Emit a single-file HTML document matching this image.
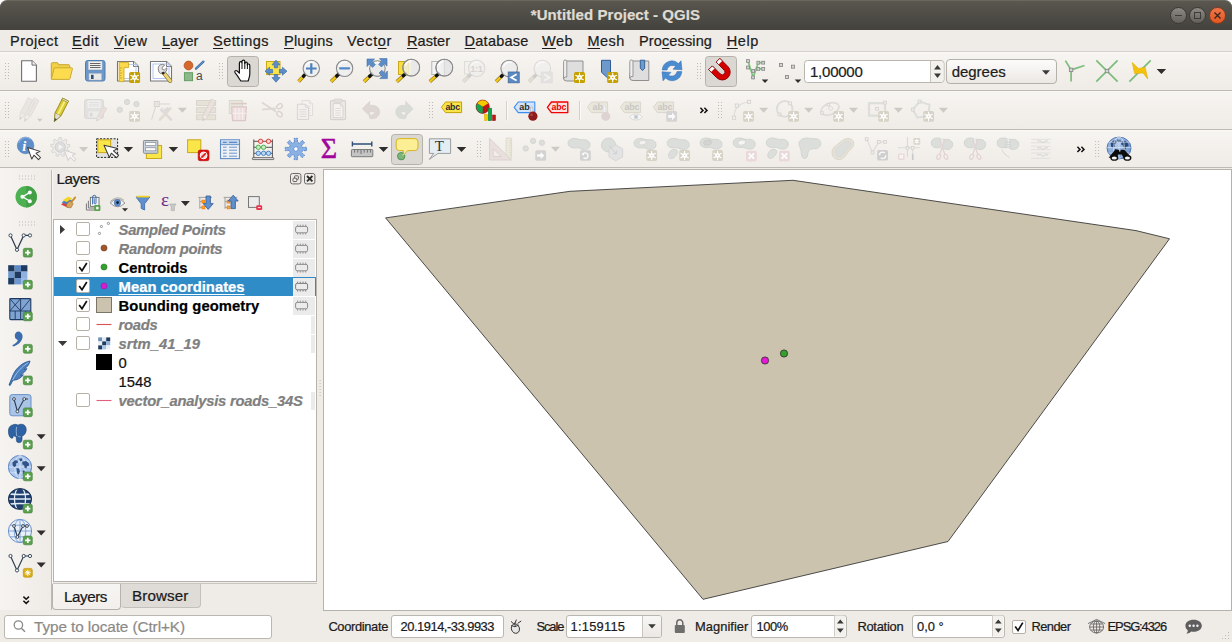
<!DOCTYPE html>
<html lang="en"><head><meta charset="utf-8"><title>*Untitled Project - QGIS</title>
<style>
*{box-sizing:border-box;margin:0;padding:0}
html,body{width:1232px;height:642px;overflow:hidden}
body{position:relative;background:#efebe7;font-family:"Liberation Sans","DejaVu Sans",sans-serif;font-size:15.2px;color:#1a1a1a}
.abs{position:absolute}
.t{position:absolute;white-space:nowrap;line-height:1;-webkit-text-stroke:.22px currentColor}
#title{left:0;top:0;width:1232px;height:30px;background:linear-gradient(#5b5850 0%,#55524b 20%,#43423d 100%);border-radius:7px 7px 0 0;border-top:1px solid #6a675f}
#titletxt{left:0;width:1232px;top:7px;text-align:center;color:#dfdbd2;font-weight:bold;font-size:15px}
.wb{position:absolute;top:7px;width:17px;height:17px;border-radius:50%;border:1px solid #3a3935;background:linear-gradient(#8b8981,#62605a)}
#menubar{left:0;top:30px;width:1232px;height:22px;background:#efebe7;border-bottom:1px solid #d6d2cd}
.mi{position:absolute;top:33px;font-size:15.3px;white-space:nowrap;line-height:17px;color:#1c1c1c}
.t u{text-decoration-thickness:1.4px;text-underline-offset:1.5px}
.tb{position:absolute;left:0;width:1232px;height:39px;background:linear-gradient(#f7f5f1,#efebe7);border-top:1px solid #faf8f5;border-bottom:1px solid #bdb9b4}
.ic{position:absolute;width:24px;height:24px;overflow:visible}
.dis{opacity:.33}
.hdl{position:absolute;width:5px;height:22px;background-image:radial-gradient(circle,#b9b5af 0.7px,transparent 1px);background-size:3px 3px;background-position:0 0}
.hdlh{position:absolute;width:22px;height:5px;background-image:radial-gradient(circle,#b9b5af 0.7px,transparent 1px);background-size:3px 3px}
.pressed{position:absolute;background:#dad7d3;border:1px solid #b4b0ab;border-radius:3px}
.arr{position:absolute;width:0;height:0;border-left:4px solid transparent;border-right:4px solid transparent;border-top:5px solid #2b2b2b}
.arr.d{border-top-color:#c9c6c2}
.sarr{position:absolute;width:0;height:0;border-left:3px solid transparent;border-right:3px solid transparent;border-top:3px solid #2b2b2b}
.field{position:absolute;background:#fff;border:1px solid #bab6b0;border-radius:3px}
.btnbg{position:absolute;background:linear-gradient(#fbfaf9,#ebe8e4);border:1px solid #b9b5af;border-radius:3px}

#ltree{left:53px;top:219px;width:264px;height:363px;background:#fff;border:1px solid #b6b2ad}
#lsel{left:54px;top:277px;width:262px;height:19px;background:#308cc6}
.cb{position:absolute;width:14px;height:14px;background:#fff;border:1px solid #b6b0a7;border-radius:2px}
.ind{position:absolute;background:#ebebeb}

#canvas{left:323px;top:169px;width:909px;height:442px;background:#fff;border:1px solid #b5b1ac}
</style></head>
<body>

<div class="abs" style="left:0;top:0;width:1232px;height:8px;background:#fff"></div><div id="title" class="abs"></div>

<div class="wb" style="left:1170px"><i class="abs" style="left:4px;top:7px;width:7px;height:1px;background:#3c3b37"></i></div>
<div class="wb" style="left:1189px"><i class="abs" style="left:4px;top:4px;width:7px;height:7px;border:1px solid #3c3b37"></i></div>
<div class="wb" style="left:1209px;background:linear-gradient(#f0764b,#e2571f);border-color:#8a3a1c"><svg class="abs" style="left:4px;top:4px" width="7" height="7" viewBox="0 0 7 7"><path d="M0.5 0.5 L6.5 6.5 M6.5 0.5 L0.5 6.5" stroke="#3a2418" stroke-width="1.3"/></svg></div>
<div id="menubar" class="abs"></div>
<div class="t" style="left:10px;top:33px;font-size:14.5px;color:#1c1c1c;letter-spacing:0.480px;line-height:17px;">Pro<u>j</u>ect</div>
<div class="t" style="left:72px;top:33px;font-size:14.5px;color:#1c1c1c;letter-spacing:0.500px;line-height:17px;"><u>E</u>dit</div>
<div class="t" style="left:114px;top:33px;font-size:14.5px;color:#1c1c1c;letter-spacing:0.582px;line-height:17px;"><u>V</u>iew</div>
<div class="t" style="left:162px;top:33px;font-size:14.5px;color:#1c1c1c;letter-spacing:0.044px;line-height:17px;"><u>L</u>ayer</div>
<div class="t" style="left:213px;top:33px;font-size:14.5px;color:#1c1c1c;letter-spacing:0.449px;line-height:17px;"><u>S</u>ettings</div>
<div class="t" style="left:284px;top:33px;font-size:14.5px;color:#1c1c1c;letter-spacing:0.205px;line-height:17px;"><u>P</u>lugins</div>
<div class="t" style="left:347px;top:33px;font-size:14.5px;color:#1c1c1c;letter-spacing:0.648px;line-height:17px;">Vect<u>o</u>r</div>
<div class="t" style="left:407px;top:33px;font-size:14.5px;color:#1c1c1c;letter-spacing:0.047px;line-height:17px;"><u>R</u>aster</div>
<div class="t" style="left:464.6px;top:33px;font-size:14.5px;color:#1c1c1c;letter-spacing:0.240px;line-height:17px;"><u>D</u>atabase</div>
<div class="t" style="left:542px;top:33px;font-size:14.5px;color:#1c1c1c;letter-spacing:0.479px;line-height:17px;"><u>W</u>eb</div>
<div class="t" style="left:587.6px;top:33px;font-size:14.5px;color:#1c1c1c;letter-spacing:0.383px;line-height:17px;"><u>M</u>esh</div>
<div class="t" style="left:639px;top:33px;font-size:14.5px;color:#1c1c1c;letter-spacing:0.127px;line-height:17px;">Pro<u>c</u>essing</div>
<div class="t" style="left:726.8px;top:33px;font-size:14.5px;color:#1c1c1c;letter-spacing:0.543px;line-height:17px;"><u>H</u>elp</div>
<div class="t" style="left:530.8px;top:7px;font-size:15px;color:#dfdbd2;font-weight:bold;letter-spacing:0.078px;">*Untitled Project - QGIS</div>
<div class="tb" style="top:52px;height:39px"></div>
<div class="tb" style="top:91px;height:39px"></div>
<div class="tb" style="top:130px;height:38px"></div>
<div class="abs" style="left:0;top:168px;width:51px;height:442px;background:linear-gradient(90deg,#f6f4f1,#efebe7)"></div>
<svg class="abs" style="left:0;top:0" width="1232" height="170" viewBox="0 0 1232 170"><rect x="5" y="63" width="1" height="1" fill="#bdb9b3"/><rect x="8" y="63" width="1" height="1" fill="#bdb9b3"/><rect x="5" y="66" width="1" height="1" fill="#bdb9b3"/><rect x="8" y="66" width="1" height="1" fill="#bdb9b3"/><rect x="5" y="69" width="1" height="1" fill="#bdb9b3"/><rect x="8" y="69" width="1" height="1" fill="#bdb9b3"/><rect x="5" y="72" width="1" height="1" fill="#bdb9b3"/><rect x="8" y="72" width="1" height="1" fill="#bdb9b3"/><rect x="5" y="75" width="1" height="1" fill="#bdb9b3"/><rect x="8" y="75" width="1" height="1" fill="#bdb9b3"/><rect x="5" y="78" width="1" height="1" fill="#bdb9b3"/><rect x="8" y="78" width="1" height="1" fill="#bdb9b3"/><rect x="219" y="63" width="1" height="1" fill="#bdb9b3"/><rect x="222" y="63" width="1" height="1" fill="#bdb9b3"/><rect x="219" y="66" width="1" height="1" fill="#bdb9b3"/><rect x="222" y="66" width="1" height="1" fill="#bdb9b3"/><rect x="219" y="69" width="1" height="1" fill="#bdb9b3"/><rect x="222" y="69" width="1" height="1" fill="#bdb9b3"/><rect x="219" y="72" width="1" height="1" fill="#bdb9b3"/><rect x="222" y="72" width="1" height="1" fill="#bdb9b3"/><rect x="219" y="75" width="1" height="1" fill="#bdb9b3"/><rect x="222" y="75" width="1" height="1" fill="#bdb9b3"/><rect x="219" y="78" width="1" height="1" fill="#bdb9b3"/><rect x="222" y="78" width="1" height="1" fill="#bdb9b3"/><rect x="697" y="63" width="1" height="1" fill="#bdb9b3"/><rect x="700" y="63" width="1" height="1" fill="#bdb9b3"/><rect x="697" y="66" width="1" height="1" fill="#bdb9b3"/><rect x="700" y="66" width="1" height="1" fill="#bdb9b3"/><rect x="697" y="69" width="1" height="1" fill="#bdb9b3"/><rect x="700" y="69" width="1" height="1" fill="#bdb9b3"/><rect x="697" y="72" width="1" height="1" fill="#bdb9b3"/><rect x="700" y="72" width="1" height="1" fill="#bdb9b3"/><rect x="697" y="75" width="1" height="1" fill="#bdb9b3"/><rect x="700" y="75" width="1" height="1" fill="#bdb9b3"/><rect x="697" y="78" width="1" height="1" fill="#bdb9b3"/><rect x="700" y="78" width="1" height="1" fill="#bdb9b3"/><path d="M21.6 60.7 h10.4 l4.4 4.4 v16.2 h-14.8 z" fill="#fff" stroke="#6e6e6e" stroke-width="1.1" stroke-linejoin="round"/><path d="M32 60.7 v4.4 h4.4" fill="#f4f4f4" stroke="#6e6e6e" stroke-width="1"/><path d="M51.3 79 v-15.3 q0-1 1-1 h4.8 q.8 0 1 .8 l.4 1.2 h10.2 q1 0 1 1 v3" fill="#f3cf45" stroke="#c6a62f" stroke-width="1"/><path d="M51.4 79.2 l2.6-10.6 q.2-.8 1-.8 h16.6 q1 0 .8 1 l-2.4 9.8 q-.2.8-1 .8 h-17 q-.8 0-.6-.2z" fill="#fddb4f" stroke="#c9aa33" stroke-width="1"/><rect x="85.5" y="60.5" width="19.5" height="20.5" rx="2.2" fill="#6c98c9" stroke="#4f7db3" stroke-width="1"/><rect x="88.5" y="61.5" width="13.5" height="8.2" fill="#f1f1ef" stroke="#d0d0d0" stroke-width=".5"/><path d="M90 63.5 h10.5 M90 65.5 h10.5 M90 67.5 h10.5" stroke="#555" stroke-width=".9"/><rect x="89" y="73.5" width="12.5" height="6.5" fill="#e9e9e7" stroke="#bbb" stroke-width=".5"/><rect x="91" y="74.8" width="2.6" height="4.2" fill="#2d4f7c"/><path d="M117.5 61.5 h16 l5 5 v14.5 h-21 z" fill="#fff" stroke="#777" stroke-width="1.1" stroke-linejoin="round"/><path d="M133.5 61.5 v5 h5" fill="#f2f2f2" stroke="#777" stroke-width="1"/><rect x="121" y="64.5" width="15" height="14" fill="none" stroke="#a8c0f0" stroke-width=".8"/><path d="M119.2 62.4 h9.4 v5.2 h-4.6 v14 h-4.8 z" fill="#fbd94c" stroke="#d5ad1e" stroke-width=".9" stroke-linejoin="round"/><path d="M119.6 68 h2.4 M119.6 70.5 h1.6 M119.6 73 h2.4 M119.6 75.5 h1.6 M119.6 78 h2.4" stroke="#b8921a" stroke-width=".7"/><rect x="129.1" y="72" width="11" height="11" rx="1.87" fill="#c4a000"/><path d="M134.6 73.1 L134.6 81.9 M130.79 75.3 L138.41 79.7 M130.79 79.7 L138.41 75.3 " stroke="#fff" stroke-width="1.1" stroke-linecap="round"/><polygon points="136.98,78.88 134.6,80.25 132.22,78.88 132.22,76.12 134.6,74.75 136.98,76.12" fill="#fff"/><circle cx="134.6" cy="77.5" r="0.82" fill="#c4a000" opacity=".8"/><path d="M150.5 61.5 h16 l5 5 v14.5 h-21 z" fill="#fff" stroke="#777" stroke-width="1.1" stroke-linejoin="round"/><path d="M166.5 61.5 v5 h5" fill="#f2f2f2" stroke="#777" stroke-width="1"/><rect x="153" y="64" width="16" height="14.5" fill="none" stroke="#a8c0f0" stroke-width=".9"/><path d="M163.2 72.2 L170.2 80.8" stroke="#8a7a3a" stroke-width="4.2" stroke-linecap="round"/><path d="M163.2 72.2 L170.2 80.8" stroke="#ecd57a" stroke-width="2.8" stroke-linecap="round"/><path d="M158.2 68.6 a4 4 0 0 1 6.4-3.4 l-2.6 2.2 l.4 2 l2 .6 l2.4-2.2 a4 4 0 0 1-5.2 4.8 l-.8 1.2 l-1.8-1.6 z" fill="#e4e4e4" stroke="#777" stroke-width=".9" stroke-linejoin="round"/><path d="M162.4 72.4 l1.6 1.6" stroke="#222" stroke-width="2.4"/><circle cx="188.5" cy="65.5" r="4.4" fill="#d4682f" stroke="#b6501e" stroke-width=".8"/><path d="M196 68.7 L203.4 61.6" stroke="#3f6ea6" stroke-width="2.3" stroke-linecap="round"/><path d="M196 68.7 L203.4 61.6" stroke="#6a98cf" stroke-width="1" stroke-linecap="round"/><rect x="184.4" y="72.7" width="8.2" height="8" fill="#8cb88c" stroke="#5b9a5b" stroke-width=".9"/><text x="196" y="79.9" font-family="Liberation Sans, sans-serif" font-size="12" fill="#4a4a4a">a</text><rect x="227.5" y="56.5" width="31" height="30" rx="3" fill="#dbd8d4" stroke="#b5b1ab"/><path d="M240.8 81 c-1.6-2.6-3.4-5.6-5.6-8.2 c-1.2-1.6 .4-3 2-1.8 l2.2 2.2 v-10 c0-2 2.6-2 2.6 0 v-1.6 c0-2 2.8-2 2.8 0 v1.8 c0-1.8 2.6-1.8 2.6 0 v1.8 c0-1.6 2.4-1.6 2.4 .2 v8.400000000000001 c0 3-1 4.400000000000001-1.6 7.2 z" fill="#fff" stroke="#111" stroke-width="1.2" stroke-linejoin="round"/><path d="M242 63.5 v5.5 M244.8 62 v7 M247.4 63.5 v5.5" stroke="#111" stroke-width="1"/><rect x="266.5" y="61.5" width="13.5" height="13" fill="#fce54b" stroke="#c9a81c" stroke-width="1"/><g transform="rotate(0 276 71.2)"><path d="M276 60.2 l4 4.6 h-2.3 v3 h-3.4 v-3 h-2.3 z" fill="#5d8cc7" stroke="#3f70ac" stroke-width=".7" stroke-linejoin="round"/></g><g transform="rotate(90 276 71.2)"><path d="M276 60.2 l4 4.6 h-2.3 v3 h-3.4 v-3 h-2.3 z" fill="#5d8cc7" stroke="#3f70ac" stroke-width=".7" stroke-linejoin="round"/></g><g transform="rotate(180 276 71.2)"><path d="M276 60.2 l4 4.6 h-2.3 v3 h-3.4 v-3 h-2.3 z" fill="#5d8cc7" stroke="#3f70ac" stroke-width=".7" stroke-linejoin="round"/></g><g transform="rotate(270 276 71.2)"><path d="M276 60.2 l4 4.6 h-2.3 v3 h-3.4 v-3 h-2.3 z" fill="#5d8cc7" stroke="#3f70ac" stroke-width=".7" stroke-linejoin="round"/></g><path d="M303.79 75.9 L298.6 81.4" stroke="#8f7a1e" stroke-width="3.6" stroke-linecap="butt"/><path d="M303.79 75.9 L298.6 81.4" stroke="#f3c515" stroke-width="2.3" stroke-linecap="butt"/><path d="M305.64 73.94 L303.52 76.19" stroke="#111" stroke-width="3.4" stroke-linecap="round"/><circle cx="311.3" cy="68.5" r="8.2" fill="#efefef" fill-opacity="1" stroke="#8a8a8a" stroke-width="1.1"/><path d="M305.56 66.45 A6.15 6.15 0 0 1 313.76 62.6" fill="none" stroke="#fff" stroke-width="1.4" stroke-opacity=".9"/><path d="M306 68.5 h10.6 M311.3 63.2 v10.6" stroke="#4d80bd" stroke-width="2.2"/><path d="M337.01 75.82 L331 81.6" stroke="#8f7a1e" stroke-width="3.6" stroke-linecap="butt"/><path d="M337.01 75.82 L331 81.6" stroke="#f3c515" stroke-width="2.3" stroke-linecap="butt"/><path d="M338.96 73.95 L336.72 76.1" stroke="#111" stroke-width="3.4" stroke-linecap="round"/><circle cx="344.6" cy="68.3" r="8.2" fill="#efefef" fill-opacity="1" stroke="#8a8a8a" stroke-width="1.1"/><path d="M338.86 66.25 A6.15 6.15 0 0 1 347.06 62.4" fill="none" stroke="#fff" stroke-width="1.4" stroke-opacity=".9"/><path d="M340 68.3 h9.2" stroke="#5588c6" stroke-width="2.2" stroke-linecap="round"/><path d="M369.99 76 L364 81.6" stroke="#8f7a1e" stroke-width="3.6" stroke-linecap="butt"/><path d="M369.99 76 L364 81.6" stroke="#f3c515" stroke-width="2.3" stroke-linecap="butt"/><path d="M371.97 74.16 L369.7 76.27" stroke="#111" stroke-width="3.4" stroke-linecap="round"/><circle cx="377.4" cy="68.6" r="7.8" fill="#e9e9e9" fill-opacity="0.9" stroke="#8a8a8a" stroke-width="1.1"/><path d="M371.94 66.65 A5.85 5.85 0 0 1 379.74 62.98" fill="none" stroke="#fff" stroke-width="1.4" stroke-opacity=".9"/><g transform="rotate(0 377.2 68.8)"><path d="M367 59 h7.6 l-2.400000000000001 2.400000000000001 l3.2 3.2 l-2.8 2.8 l-3.2-3.2 l-2.4 2.4 z" fill="#5d8cc7" stroke="#4070ad" stroke-width=".6" stroke-linejoin="round"/></g><g transform="rotate(90 377.2 68.8)"><path d="M367 59 h7.6 l-2.400000000000001 2.400000000000001 l3.2 3.2 l-2.8 2.8 l-3.2-3.2 l-2.4 2.4 z" fill="#5d8cc7" stroke="#4070ad" stroke-width=".6" stroke-linejoin="round"/></g><g transform="rotate(180 377.2 68.8)"><path d="M367 59 h7.6 l-2.400000000000001 2.400000000000001 l3.2 3.2 l-2.8 2.8 l-3.2-3.2 l-2.4 2.4 z" fill="#5d8cc7" stroke="#4070ad" stroke-width=".6" stroke-linejoin="round"/></g><rect x="398.5" y="61.5" width="10" height="13" fill="#f7df3e" stroke="#c9a81c" stroke-width="1"/><path d="M403.57 75.48 L396.8 81.6" stroke="#8f7a1e" stroke-width="3.6" stroke-linecap="butt"/><path d="M403.57 75.48 L396.8 81.6" stroke="#f3c515" stroke-width="2.3" stroke-linecap="butt"/><path d="M405.57 73.66 L403.27 75.74" stroke="#111" stroke-width="3.4" stroke-linecap="round"/><circle cx="411.2" cy="67.6" r="8.4" fill="#f0eedd" fill-opacity="0.88" stroke="#8a8a8a" stroke-width="1.1"/><path d="M405.32 65.5 A6.3 6.3 0 0 1 413.72 61.55" fill="none" stroke="#fff" stroke-width="1.4" stroke-opacity=".9"/><path d="M411.2 59.4 a8.2 8.2 0 0 1 0 16.4 z" fill="#e9e9e9"/><circle cx="411.2" cy="67.6" r="8.4" fill="none" stroke="#8a8a8a" stroke-width="1.1"/><rect x="431.8" y="61.5" width="10" height="13" fill="#f4f4f4" stroke="#b5b5b5" stroke-width="1"/><path d="M436.66 75.47 L429.8 81.6" stroke="#8f7a1e" stroke-width="3.6" stroke-linecap="butt"/><path d="M436.66 75.47 L429.8 81.6" stroke="#f3c515" stroke-width="2.3" stroke-linecap="butt"/><path d="M438.67 73.67 L436.36 75.73" stroke="#111" stroke-width="3.4" stroke-linecap="round"/><circle cx="444.3" cy="67.6" r="8.4" fill="#f2f2f2" fill-opacity="0.9" stroke="#8a8a8a" stroke-width="1.1"/><path d="M438.42 65.5 A6.3 6.3 0 0 1 446.82 61.55" fill="none" stroke="#fff" stroke-width="1.4" stroke-opacity=".9"/><path d="M444.3 59.4 a8.2 8.2 0 0 1 0 16.4 z" fill="#e6e6e6"/><path d="M444.3 59.6 v16" stroke="#cfcfcf" stroke-width=".8"/><circle cx="444.3" cy="67.6" r="8.4" fill="none" stroke="#8a8a8a" stroke-width="1.1"/><g opacity=".55"><rect x="464.5" y="61.5" width="9" height="12.5" fill="#f2f1ef" stroke="#cfccc8" stroke-width="1"/><path d="M469.22 75.83 L463.3 81.6" stroke="#bdb9b0" stroke-width="3.6" stroke-linecap="butt"/><path d="M469.22 75.83 L463.3 81.6" stroke="#d9d4c4" stroke-width="2.3" stroke-linecap="butt"/><path d="M471.16 73.95 L468.94 76.11" stroke="#b0b0b0" stroke-width="3.4" stroke-linecap="round"/><circle cx="476.7" cy="68.3" r="8.2" fill="#f0efee" fill-opacity="1" stroke="#c9c9c9" stroke-width="1.1"/><path d="M470.96 66.25 A6.15 6.15 0 0 1 479.16 62.4" fill="none" stroke="#fff" stroke-width="1.4" stroke-opacity=".9"/><text x="470.2" y="72.3" font-family="Liberation Sans, sans-serif" font-weight="bold" font-size="9.5" fill="#bdbdbd" letter-spacing="-.4">1:1</text></g><path d="M501.72 76.03 L496 81.6" stroke="#8f7a1e" stroke-width="3.6" stroke-linecap="butt"/><path d="M501.72 76.03 L496 81.6" stroke="#f3c515" stroke-width="2.3" stroke-linecap="butt"/><path d="M503.66 74.15 L501.44 76.31" stroke="#111" stroke-width="3.4" stroke-linecap="round"/><circle cx="509.2" cy="68.6" r="8.3" fill="#ededed" fill-opacity="1" stroke="#8a8a8a" stroke-width="1.1"/><path d="M503.39 66.52 A6.23 6.23 0 0 1 511.69 62.62" fill="none" stroke="#fff" stroke-width="1.4" stroke-opacity=".9"/><rect x="508.2" y="72" width="11" height="10.8" fill="#5b89c2" stroke="#41699c" stroke-width=".8"/><path d="M516.6 74.2 l-5.6 3.2 l5.6 3.2" fill="none" stroke="#fff" stroke-width="1.7"/><g opacity=".55"><path d="M534.81 76.02 L529 81.6" stroke="#bdb9b0" stroke-width="3.6" stroke-linecap="butt"/><path d="M534.81 76.02 L529 81.6" stroke="#d9d4c4" stroke-width="2.3" stroke-linecap="butt"/><path d="M536.76 74.15 L534.52 76.3" stroke="#b0b0b0" stroke-width="3.4" stroke-linecap="round"/><circle cx="542.3" cy="68.6" r="8.3" fill="#f0efee" fill-opacity="1" stroke="#c9c9c9" stroke-width="1.1"/><path d="M536.49 66.52 A6.23 6.23 0 0 1 544.79 62.62" fill="none" stroke="#fff" stroke-width="1.4" stroke-opacity=".9"/><rect x="541.2" y="72" width="11" height="10.8" fill="#d9d9d9" stroke="#cfcfcf" stroke-width=".8"/><path d="M544 74.2 l5.6 3.2 l-5.6 3.2" fill="none" stroke="#f4f4f4" stroke-width="1.7"/></g><path d="M565.7 61 h17.3 v20 h-16.2 q-3.4 0 -3.4 -3 z" fill="#dedede" stroke="#8f8f8f" stroke-width="1" stroke-linejoin="round"/><path d="M563.6 61.5 q0-1.5 1.6-1.5 q1.6 0 1.6 1.5 v15.5 q-2.400000000000001-.6-3.2 1.6 z" fill="#efefef" stroke="#8f8f8f" stroke-width=".9"/><rect x="574" y="72" width="11" height="11" rx="1.87" fill="#c4a000"/><path d="M579.5 73.1 L579.5 81.9 M575.69 75.3 L583.31 79.7 M575.69 79.7 L583.31 75.3 " stroke="#fff" stroke-width="1.1" stroke-linecap="round"/><polygon points="581.88,78.88 579.5,80.25 577.12,78.88 577.12,76.12 579.5,74.75 581.88,76.12" fill="#fff"/><circle cx="579.5" cy="77.5" r="0.82" fill="#c4a000" opacity=".8"/><path d="M601.5 60.3 h9 v20.2 l-4-3.6 l-5-4.6 z" fill="#6d9acb" stroke="#2f5c96" stroke-width="1" stroke-linejoin="round"/><rect x="607.2" y="72" width="11" height="11" rx="1.87" fill="#c4a000"/><path d="M612.7 73.1 L612.7 81.9 M608.89 75.3 L616.51 79.7 M608.89 79.7 L616.51 75.3 " stroke="#fff" stroke-width="1.1" stroke-linecap="round"/><polygon points="615.08,78.88 612.7,80.25 610.32,78.88 610.32,76.12 612.7,74.75 615.08,76.12" fill="#fff"/><circle cx="612.7" cy="77.5" r="0.82" fill="#c4a000" opacity=".8"/><path d="M631.9 61 h16.9 v19.5 h-15.8 q-3.4 0 -3.4 -3 z" fill="#dedede" stroke="#8f8f8f" stroke-width="1" stroke-linejoin="round"/><path d="M629.8 61.5 q0-1.5 1.6-1.5 q1.6 0 1.6 1.5 v15 q-2.400000000000001-.6-3.2 1.6 z" fill="#efefef" stroke="#8f8f8f" stroke-width=".9"/><path d="M640.3 60.2 h4.4 v8 l-2.2 2.4 l-2.2-2.4 z" fill="#6d9acb" stroke="#2f5c96" stroke-width=".9"/><path d="M662.2 70 a9.6 9.6 0 0 1 16.2-6.400000000000001 l2.6-2.800000000000001 l1 9 l-9 -.6 l2.6-2.6 a5.4 5.4 0 0 0 -8.6 3.4 z" fill="#4b8bd0" stroke="#2f6bb0" stroke-width=".5"/><path d="M681.8 71.6 a9.6 9.6 0 0 1 -16.2 6.400000000000001 l-2.6 2.800000000000001 l-1 -9 l9 .6 l-2.6 2.6 a5.4 5.4 0 0 0 8.6-3.4 z" fill="#4b8bd0" stroke="#2f6bb0" stroke-width=".5"/><rect x="705.5" y="56.5" width="31" height="30" rx="3" fill="#dbd8d4" stroke="#b5b1ab"/><g transform="rotate(-45 721.5 71.3)"><path d="M713.6 61 h5.2 v11.4 a2.7 2.7 0 0 0 5.4 0 v-11.4 h5.2 v11.4 a7.9 7.9 0 0 1 -15.8 0 z" fill="#d40000" stroke="#8c0000" stroke-width=".9"/><rect x="713.6" y="61" width="5.2" height="3.8" fill="#fff" stroke="#8c0000" stroke-width=".7"/><rect x="724.2" y="61" width="5.2" height="3.8" fill="#fff" stroke="#8c0000" stroke-width=".7"/></g><path d="M748 61 L753.2 77.4 L758.3 62.7 H763.2 M748 67.5 L753.2 71 L758.3 68.9 H763.2" fill="none" stroke="#7cc47c" stroke-width="1.7"/><rect x="746.6" y="59.6" width="2.8" height="2.8" fill="#d6d6d6" stroke="#8c8c8c" stroke-width=".9"/><rect x="746.6" y="66.1" width="2.8" height="2.8" fill="#d6d6d6" stroke="#8c8c8c" stroke-width=".9"/><rect x="751.8" y="69.6" width="2.8" height="2.8" fill="#d6d6d6" stroke="#8c8c8c" stroke-width=".9"/><rect x="751.6" y="76" width="2.8" height="2.8" fill="#d6d6d6" stroke="#8c8c8c" stroke-width=".9"/><rect x="756.9" y="61.3" width="2.8" height="2.8" fill="#d6d6d6" stroke="#8c8c8c" stroke-width=".9"/><rect x="761.8" y="61.3" width="2.8" height="2.8" fill="#d6d6d6" stroke="#8c8c8c" stroke-width=".9"/><rect x="756.9" y="67.5" width="2.8" height="2.8" fill="#d6d6d6" stroke="#8c8c8c" stroke-width=".9"/><rect x="761.8" y="67.5" width="2.8" height="2.8" fill="#d6d6d6" stroke="#8c8c8c" stroke-width=".9"/><path d="M761.75 79.6 h6.5 l-3.25 3.4 z" fill="#2e2e2e"/><rect x="779.5" y="63.5" width="3" height="3" fill="#d6d6d6" stroke="#8c8c8c" stroke-width=".9"/><rect x="791.5" y="65.2" width="3" height="3" fill="#d6d6d6" stroke="#8c8c8c" stroke-width=".9"/><rect x="785.5" y="75.5" width="3" height="3" fill="#d6d6d6" stroke="#8c8c8c" stroke-width=".9"/><path d="M794.75 79.6 h6.5 l-3.25 3.4 z" fill="#2e2e2e"/><rect x="804.5" y="60.5" width="139.5" height="22" rx="3" fill="#fff" stroke="#b9b5af"/><path d="M930.5 61 v21" stroke="#c9c5bf"/><path d="M931 61 h10 q2.500000000000001 0 2.500000000000001 2.500000000000001 v16 q0 2.500000000000001-2.500000000000001 2.500000000000001 h-10 z" fill="#f3f1ee"/><path d="M934 69.5 l3.5-4.5 l3.5 4.5 z M934 73.5 l3.5 4.5 l3.5-4.5 z" fill="#3a3a3a"/><defs><linearGradient id="btng" x1="0" y1="0" x2="0" y2="1"><stop offset="0" stop-color="#fdfcfb"/><stop offset="1" stop-color="#ebe8e3"/></linearGradient></defs><rect x="946.5" y="59.5" width="110" height="24" rx="3.5" fill="url(#btng)" stroke="#b4b0aa"/><path d="M1042 70.3 h8 l-4 4.4 z" fill="#3a3a3a"/><path d="M1065.4 60.6 L1071.1 69.9 L1084.5 65.5 M1071.1 69.9 V81.6" fill="none" stroke="#7cbd7c" stroke-width="1.7"/><rect x="1069.4" y="68.2" width="3.4" height="3.4" fill="#d6d6d6" stroke="#8c8c8c" stroke-width=".9"/><path d="M1096.3 60.3 L1117.6 81.6 M1117.6 60.3 L1096.3 81.6" stroke="#7cbd7c" stroke-width="1.7"/><rect x="1105.3" y="69.3" width="3.4" height="3.4" fill="#d6d6d6" stroke="#8c8c8c" stroke-width=".9"/><path d="M1129.4 81.6 L1150.7 60.3" stroke="#7cbd7c" stroke-width="1.7"/><path d="M1132.2 62.5 L1138.4 68.4 L1145.2 67.4 L1147.8 79 L1143 73 L1134.6 73.6 z" fill="#f4c20d" stroke="#e0ac00" stroke-width=".6" stroke-linejoin="round"/><path d="M1156.65 69 h9.5 l-4.75 5 z" fill="#2e2e2e"/><rect x="5" y="102" width="1" height="1" fill="#bdb9b3"/><rect x="8" y="102" width="1" height="1" fill="#bdb9b3"/><rect x="5" y="105" width="1" height="1" fill="#bdb9b3"/><rect x="8" y="105" width="1" height="1" fill="#bdb9b3"/><rect x="5" y="108" width="1" height="1" fill="#bdb9b3"/><rect x="8" y="108" width="1" height="1" fill="#bdb9b3"/><rect x="5" y="111" width="1" height="1" fill="#bdb9b3"/><rect x="8" y="111" width="1" height="1" fill="#bdb9b3"/><rect x="5" y="114" width="1" height="1" fill="#bdb9b3"/><rect x="8" y="114" width="1" height="1" fill="#bdb9b3"/><rect x="5" y="117" width="1" height="1" fill="#bdb9b3"/><rect x="8" y="117" width="1" height="1" fill="#bdb9b3"/><rect x="429" y="102" width="1" height="1" fill="#bdb9b3"/><rect x="432" y="102" width="1" height="1" fill="#bdb9b3"/><rect x="429" y="105" width="1" height="1" fill="#bdb9b3"/><rect x="432" y="105" width="1" height="1" fill="#bdb9b3"/><rect x="429" y="108" width="1" height="1" fill="#bdb9b3"/><rect x="432" y="108" width="1" height="1" fill="#bdb9b3"/><rect x="429" y="111" width="1" height="1" fill="#bdb9b3"/><rect x="432" y="111" width="1" height="1" fill="#bdb9b3"/><rect x="429" y="114" width="1" height="1" fill="#bdb9b3"/><rect x="432" y="114" width="1" height="1" fill="#bdb9b3"/><rect x="429" y="117" width="1" height="1" fill="#bdb9b3"/><rect x="432" y="117" width="1" height="1" fill="#bdb9b3"/><rect x="718" y="102" width="1" height="1" fill="#bdb9b3"/><rect x="721" y="102" width="1" height="1" fill="#bdb9b3"/><rect x="718" y="105" width="1" height="1" fill="#bdb9b3"/><rect x="721" y="105" width="1" height="1" fill="#bdb9b3"/><rect x="718" y="108" width="1" height="1" fill="#bdb9b3"/><rect x="721" y="108" width="1" height="1" fill="#bdb9b3"/><rect x="718" y="111" width="1" height="1" fill="#bdb9b3"/><rect x="721" y="111" width="1" height="1" fill="#bdb9b3"/><rect x="718" y="114" width="1" height="1" fill="#bdb9b3"/><rect x="721" y="114" width="1" height="1" fill="#bdb9b3"/><rect x="718" y="117" width="1" height="1" fill="#bdb9b3"/><rect x="721" y="117" width="1" height="1" fill="#bdb9b3"/><g opacity=".6"><path d="M28.1 97.76 L20.52 112.37 L19.8 119.6 L25.31 114.85 L32.9 100.24 z" fill="#e3dedb" stroke="#d5d0cc" stroke-width=".9" stroke-linejoin="round"/><path d="M20.52 112.37 L19.8 119.6 L25.31 114.85 z" fill="#ece9e6" stroke="#d5d0cc" stroke-width=".6" stroke-linejoin="round"/><path d="M20.09 116.71 L19.8 119.6 L22 117.7 z" fill="#c9c5c1"/><path d="M34.03 97.88 L25.44 113.91 L24.6 121.4 L30.37 116.55 L38.97 100.52 z" fill="#e6e0dc" stroke="#d3ceca" stroke-width=".9" stroke-linejoin="round"/><path d="M25.44 113.91 L24.6 121.4 L30.37 116.55 z" fill="#efece9" stroke="#d3ceca" stroke-width=".6" stroke-linejoin="round"/><path d="M24.94 118.4 L24.6 121.4 L26.91 119.46 z" fill="#c4c0bc"/><path d="M35.56 100.96 L27.91 115.23" stroke="#dcd3cf" stroke-width="1.57"/></g><path d="M37 118.8 h5.6 l-2.8 3 z" fill="#cdcac5"/><path d="M62.66 98.09 L55.13 112.75 L54.3 121.6 L61 115.77 L68.54 101.11 z" fill="#dccb2e" stroke="#8f8420" stroke-width=".9" stroke-linejoin="round"/><path d="M55.13 112.75 L54.3 121.6 L61 115.77 z" fill="#e0ddd6" stroke="#8f8420" stroke-width=".6" stroke-linejoin="round"/><path d="M54.63 118.06 L54.3 121.6 L56.98 119.27 z" fill="#4a4a4a"/><path d="M64.69 101.38 L58.07 114.26" stroke="#f6ee8a" stroke-width="1.85"/><path d="M62.66 98.09 L61.93 99.52 L67.8 102.53 L68.54 101.11 z" fill="#f0eee6" stroke="#8f8420" stroke-width=".7"/><g opacity=".75"><rect x="84.5" y="99.5" width="19" height="19" rx="2" fill="#dcdcdc" stroke="#d2d2d2"/><rect x="87.5" y="100.5" width="13" height="7.5" fill="#efefef"/><path d="M89 102.5 h10 M89 104.3 h10 M89 106.100000000000001 h10" stroke="#d5d5d5" stroke-width=".8"/><rect x="88.5" y="111.5" width="11" height="6" fill="#ebebeb"/><rect x="90" y="112.8" width="2.4" height="3.8" fill="#d0d0d0"/><path d="M103.59 106.59 L97.71 115.97 L96.8 121 L100.93 117.98 L106.81 108.61 z" fill="#e6d9d5" stroke="#d8cdc9" stroke-width=".9" stroke-linejoin="round"/><path d="M97.71 115.97 L96.8 121 L100.93 117.98 z" fill="#efebe8" stroke="#d8cdc9" stroke-width=".6" stroke-linejoin="round"/><path d="M97.17 118.99 L96.8 121 L98.45 119.79 z" fill="#c9c5c1"/></g><circle cx="119.8" cy="109.8" r="2.7" fill="#dddedb" stroke="#d2d3cf" stroke-width=".8"/><circle cx="127" cy="102" r="2.7" fill="#dddedb" stroke="#d2d3cf" stroke-width=".8"/><circle cx="136.4" cy="104" r="2.7" fill="#dddedb" stroke="#d2d3cf" stroke-width=".8"/><rect x="129.2" y="111" width="10.8" height="10.8" rx="1.84" fill="#d6d2c4"/><path d="M134.6 112.08 L134.6 120.72 M130.86 114.24 L138.34 118.56 M130.86 118.56 L138.34 114.24 " stroke="#fff" stroke-width="1.08" stroke-linecap="round"/><polygon points="136.94,117.75 134.6,119.1 132.26,117.75 132.26,115.05 134.6,113.7 136.94,115.05" fill="#fff"/><circle cx="134.6" cy="116.4" r="0.81" fill="#d6d2c4" opacity=".8"/><g opacity=".8"><path d="M159.5 104 H170 M155.6 106.8 L151.6 119.5" stroke="#d3cfcb" stroke-width="1"/><rect x="154.3" y="101.5" width="5" height="5" fill="#f1efed" stroke="#cfcbc7" stroke-width="1"/><circle cx="156.8" cy="104" r="1.2" fill="none" stroke="#cfcbc7" stroke-width=".7"/><path d="M160 119.6 L170.4 108.4" stroke="#dedacd" stroke-width="2.8" stroke-linecap="round"/><path d="M163.6 109.4 l4-2.4 l2.6 2.6 l-4 2.6 z" fill="#d6d6d4"/><path d="M171 119.6 L162.2 110.4" stroke="#ddd5d2" stroke-width="2.6" stroke-linecap="round"/><path d="M160.2 111 a3 3 0 0 1 3-3.6 l-1 2 l1.6 1.4 l1.8-.8 a3 3 0 0 1-3.4 2.600000000000001 z" fill="#d9d9d7"/></g><path d="M177.8 107.8 h9.2 l-4.6 5 z" fill="#cdcac5"/><rect x="196.5" y="100.5" width="19.2" height="5" fill="#e6e2d8" stroke="#d6d2c7" stroke-width=".8"/><rect x="196.5" y="107.7" width="19.2" height="5" fill="#e6e2d8" stroke="#d6d2c7" stroke-width=".8"/><rect x="196.5" y="114.8" width="19.2" height="5" fill="#e6e2d8" stroke="#d6d2c7" stroke-width=".8"/><g opacity=".9"><path d="M211.39 99.04 L203.49 114.1 L202.8 120.8 L207.92 116.43 L215.81 101.36 z" fill="#ebe0dd" stroke="#d9cfcb" stroke-width=".9" stroke-linejoin="round"/><path d="M203.49 114.1 L202.8 120.8 L207.92 116.43 z" fill="#f2efec" stroke="#d9cfcb" stroke-width=".6" stroke-linejoin="round"/><path d="M203.08 118.12 L202.8 120.8 L204.85 119.05 z" fill="#cfcac6"/><path d="M211.39 99.04 L210.64 100.46 L215.07 102.78 L215.81 101.36 z" fill="#f4f2f0" stroke="#d9cfcb" stroke-width=".7"/></g><rect x="229.3" y="100.5" width="13" height="13" fill="#e9e6dc" stroke="#d8d5ca" stroke-width=".9"/><path d="M230.8 103.6 h16" stroke="#dcc9c9" stroke-width="1.6"/><path d="M231.6 106.8 h14.8 l-1 13.8 h-12.8 z" fill="#eedfdf" stroke="#dcc6c6" stroke-width="1.2" stroke-linejoin="round"/><path d="M235.4 108 v11.5 M239 108 v11.5 M242.6 108 v11.5 M232.4 113.4 h13.4" stroke="#f6eeee" stroke-width="1.1"/><g fill="none" stroke="#dad0ce" stroke-width="1.2"><path d="M262 102.6 L276.2 111.8 M262 109.6 L276 108.4" stroke-width="1.8" stroke="#ddd6d3"/><ellipse cx="279.6" cy="106.2" rx="3" ry="2.2" transform="rotate(-35 279.6 106.2)"/><ellipse cx="279.6" cy="114.2" rx="3" ry="2.2" transform="rotate(40 279.6 114.2)"/></g><path d="M302 100.6 H309.4 L312.6 103.8 V115.4 H302 z" fill="#f5f3f1" stroke="#e0dcd9" stroke-width="1" stroke-linejoin="round"/><path d="M309.4 100.6 V103.8 H312.6" fill="none" stroke="#e0dcd9" stroke-width=".8"/><path d="M304 106 H310.6" stroke="#e0dcd9" stroke-width=".8"/><path d="M304 108.3 H310.6" stroke="#e0dcd9" stroke-width=".8"/><path d="M304 110.6 H310.6" stroke="#e0dcd9" stroke-width=".8"/><path d="M304 112.9 H310.6" stroke="#e0dcd9" stroke-width=".8"/><path d="M297.4 104.2 H305.4 L308.6 107.4 V119.4 H297.4 z" fill="#f3f1ef" stroke="#d8d3d0" stroke-width="1" stroke-linejoin="round"/><path d="M305.4 104.2 V107.4 H308.6" fill="none" stroke="#d8d3d0" stroke-width=".8"/><path d="M299.4 109.6 H306.6" stroke="#d8d3d0" stroke-width=".8"/><path d="M299.4 111.9 H306.6" stroke="#d8d3d0" stroke-width=".8"/><path d="M299.4 114.2 H306.6" stroke="#d8d3d0" stroke-width=".8"/><path d="M299.4 116.5 H306.6" stroke="#d8d3d0" stroke-width=".8"/><rect x="330.5" y="100.6" width="15" height="19" rx="1" fill="#ece9e5" stroke="#d6d1cd" stroke-width="1.1"/><rect x="334" y="99" width="8.2" height="3.6" rx=".8" fill="#e2dfdc" stroke="#d6d1cd" stroke-width=".7"/><path d="M333.2 103.6 H340.4 L343 106.2 V117.6 H333.2 z" fill="#f6f4f2" stroke="#d8d3d0" stroke-width="1" stroke-linejoin="round"/><path d="M340.4 103.6 V106.2 H343" fill="none" stroke="#d8d3d0" stroke-width=".8"/><path d="M335.2 108.4 H341" stroke="#d8d3d0" stroke-width=".8"/><path d="M335.2 110.7 H341" stroke="#d8d3d0" stroke-width=".8"/><path d="M335.2 113 H341" stroke="#d8d3d0" stroke-width=".8"/><path d="M335.2 115.3 H341" stroke="#d8d3d0" stroke-width=".8"/><path d="M362.4 108.8 L369.6 101.4 V105.4 h3.6 a6.4 6.4 0 0 1 6.4 6.4 a6.6 6.6 0 0 1-6.6 6.800000000000001 h-2 a1.6 1.6 0 0 1 0-3.400000000000001 a3.6 3.6 0 0 0 3.600000000000001-3.600000000000001 h-5 v4.400000000000001 z" fill="#ded6d3" stroke="#d9d0cd" stroke-width=".7" stroke-linejoin="round"/><path d="M413 108.8 L405.8 101.4 V105.4 h-3.6 a6.4 6.4 0 0 0-6.4 6.4 a6.6 6.6 0 0 0 6.6 6.800000000000001 h2 a1.6 1.6 0 0 0 0-3.400000000000001 a3.6 3.6 0 0 1-3.600000000000001-3.600000000000001 h5 v4.400000000000001 z" fill="#d9dbd7" stroke="#d2d4d0" stroke-width=".7" stroke-linejoin="round"/><path d="M441.4 107.3 L445.6 102 H461.6 V112.6 H445.6 z" fill="#fbe44a" stroke="#c4a000" stroke-width="1" stroke-linejoin="round"/><text x="445.4" y="110.4" font-family="Liberation Sans, sans-serif" font-weight="bold" font-size="8.8" fill="#2a2a2a" letter-spacing="-0.2">abc</text><circle cx="482.7" cy="106.7" r="6.7" fill="#c01515"/><path d="M482.7 106.7 L477 103.2 A6.7 6.7 0 0 1 488.4 103.2 z" fill="#f7ca00"/><path d="M482.7 106.7 L477 103.2 A6.7 6.7 0 0 0 482.7 113.4 z" fill="#12a44e"/><circle cx="482.7" cy="106.7" r="6.7" fill="none" stroke="#8c1010" stroke-width=".5"/><rect x="484.5" y="114.4" width="2.9" height="6.2" fill="#f7ca00" stroke="#e0a800" stroke-width=".5"/><rect x="488.3" y="108.2" width="3.4" height="12.4" fill="#12a44e" stroke="#0b7a38" stroke-width=".6"/><rect x="492.5" y="115" width="3" height="5.6" fill="#c01515" stroke="#8c1010" stroke-width=".5"/><path d="M506.5 101 V120" stroke="#d3cfca" stroke-width="1"/><path d="M507.5 101 V120" stroke="#fbfaf9" stroke-width="1"/><path d="M579.5 101 V120" stroke="#d3cfca" stroke-width="1"/><path d="M580.5 101 V120" stroke="#fbfaf9" stroke-width="1"/><path d="M514.2 107.3 L518.2 102 H534.8 V112.6 H518.2 z" fill="#d3e4fb" stroke="#3b8ef0" stroke-width="1.1" stroke-linejoin="round"/><text x="519.2" y="110.4" font-family="Liberation Sans, sans-serif" font-weight="bold" font-size="9" fill="#2a2a2a" letter-spacing="0">ab</text><path d="M530.8 107 q.8-1.6 1.8 0 l.8 6 h-3.2 z" fill="#e8e8ee" stroke="#9a9aa6" stroke-width=".5"/><circle cx="532.9" cy="116.2" r="4.6" fill="#8e1c1c"/><circle cx="531.6" cy="114.8" r="1.5" fill="#b34a4a" opacity=".8"/><path d="M547.4 107.3 L551.4 102 H567.8 V112.6 H551.4 z" fill="#fde0e0" stroke="#f00000" stroke-width="1.3" stroke-linejoin="round"/><text x="551.6" y="110.4" font-family="Liberation Sans, sans-serif" font-weight="bold" font-size="8.8" fill="#e80000" letter-spacing="-0.2">abc</text><path d="M587.4 107.3 L591.4 102 H607.6 V112.6 H591.4 z" fill="#e9e6dc" stroke="#dad7cc" stroke-width="1" stroke-linejoin="round"/><text x="592.6" y="110.4" font-family="Liberation Sans, sans-serif" font-weight="bold" font-size="9" fill="#c9c7c2" letter-spacing="0">ab</text><path d="M603.6 107 q.8-1.6 1.8 0 l.8 6 h-3.2 z" fill="#f1f0f2" stroke="#dedee2" stroke-width=".5"/><circle cx="605.7" cy="116.2" r="4.5" fill="#dfd2d2"/><path d="M620.4 107.3 L624.4 102 H640.6 V112.6 H624.4 z" fill="#e9e6dc" stroke="#dad7cc" stroke-width="1" stroke-linejoin="round"/><text x="624.6" y="110.4" font-family="Liberation Sans, sans-serif" font-weight="bold" font-size="8.8" fill="#c9c7c2" letter-spacing="-0.2">abc</text><path d="M629.4 117 q6.6-6.4 13.2 0 q-6.6 6.4-13.2 0 z" fill="#f7f7f7" stroke="#d5d5d5" stroke-width=".8"/><circle cx="636" cy="117" r="2.4" fill="#d3d7dc"/><circle cx="636" cy="117" r="1" fill="#bfbfbf"/><path d="M653.4 107.3 L657.4 102 H673.6 V112.6 H657.4 z" fill="#e9e6dc" stroke="#dad7cc" stroke-width="1" stroke-linejoin="round"/><text x="657.6" y="110.4" font-family="Liberation Sans, sans-serif" font-weight="bold" font-size="8.8" fill="#c9c7c2" letter-spacing="-0.2">abc</text><rect x="666.3" y="111" width="10.8" height="10.8" rx="1.6" fill="#d4d4d4"/><path d="M668.2 115 h3.800000000000001 v-2.400000000000001 l3.600000000000001 3.800000000000001 l-3.600000000000001 3.800000000000001 v-2.400000000000001 h-3.800000000000001 z" fill="#fafafa"/><path d="M700.4 107.8 l2.6 2.6 l-2.6 2.6 M704.4 107.8 l2.6 2.6 l-2.6 2.6" fill="none" stroke="#111" stroke-width="1.5"/><path d="M734 117.7 Q734 103.5 749 101.8" fill="none" stroke="#dcdedb" stroke-width="1.2"/><rect x="732.4" y="116.1" width="3.2" height="3.2" fill="#f2f1ef" stroke="#d6d3cf" stroke-width=".9"/><rect x="735.2" y="104" width="3.2" height="3.2" fill="#f2f1ef" stroke="#d6d3cf" stroke-width=".9"/><rect x="747.4" y="100.2" width="3.2" height="3.2" fill="#f2f1ef" stroke="#d6d3cf" stroke-width=".9"/><rect x="743.1" y="111" width="10.8" height="10.8" rx="1.84" fill="#d6d2c6"/><path d="M748.5 112.08 L748.5 120.72 M744.76 114.24 L752.24 118.56 M744.76 118.56 L752.24 114.24 " stroke="#fff" stroke-width="1.08" stroke-linecap="round"/><polygon points="750.84,117.75 748.5,119.1 746.16,117.75 746.16,115.05 748.5,113.7 750.84,115.05" fill="#fff"/><circle cx="748.5" cy="116.4" r="0.81" fill="#d6d2c6" opacity=".8"/><path d="M759.1 107.8 h9.2 l-4.6 5 z" fill="#cdcac5"/><circle cx="784.7" cy="108.9" r="7.8" fill="none" stroke="#dcdedb" stroke-width="2"/><rect x="788.6" y="102" width="2.8" height="2.8" fill="#f2f1ef" stroke="#d6d3cf" stroke-width=".9"/><rect x="778" y="113" width="2.8" height="2.8" fill="#f2f1ef" stroke="#d6d3cf" stroke-width=".9"/><rect x="788.2" y="111" width="10.8" height="10.8" rx="1.84" fill="#d6d2c6"/><path d="M793.6 112.08 L793.6 120.72 M789.86 114.24 L797.34 118.56 M789.86 118.56 L797.34 114.24 " stroke="#fff" stroke-width="1.08" stroke-linecap="round"/><polygon points="795.94,117.75 793.6,119.1 791.26,117.75 791.26,115.05 793.6,113.7 795.94,115.05" fill="#fff"/><circle cx="793.6" cy="116.4" r="0.81" fill="#d6d2c6" opacity=".8"/><path d="M804.1 107.8 h9.2 l-4.6 5 z" fill="#cdcac5"/><ellipse cx="830" cy="109" rx="9.4" ry="5.6" transform="rotate(-22 830 109)" fill="none" stroke="#dcdedb" stroke-width="1.8"/><circle cx="830.6" cy="108.4" r="2" fill="none" stroke="#dcdedb" stroke-width="1"/><rect x="827.1" y="103.3" width="2.6" height="2.6" fill="#f2f1ef" stroke="#d6d3cf" stroke-width=".9"/><rect x="820.7" y="111.7" width="2.6" height="2.6" fill="#f2f1ef" stroke="#d6d3cf" stroke-width=".9"/><rect x="833.2" y="111" width="10.8" height="10.8" rx="1.84" fill="#d6d2c6"/><path d="M838.6 112.08 L838.6 120.72 M834.86 114.24 L842.34 118.56 M834.86 118.56 L842.34 114.24 " stroke="#fff" stroke-width="1.08" stroke-linecap="round"/><polygon points="840.94,117.75 838.6,119.1 836.26,117.75 836.26,115.05 838.6,113.7 840.94,115.05" fill="#fff"/><circle cx="838.6" cy="116.4" r="0.81" fill="#d6d2c6" opacity=".8"/><path d="M848.9 107.8 h9.2 l-4.6 5 z" fill="#cdcac5"/><rect x="869" y="103.2" width="16" height="12.4" fill="none" stroke="#dcdedb" stroke-width="2.2"/><rect x="883.6" y="101.2" width="2.8" height="2.8" fill="#f2f1ef" stroke="#d6d3cf" stroke-width=".9"/><rect x="875.6" y="107.4" width="2.8" height="2.8" fill="#f2f1ef" stroke="#d6d3cf" stroke-width=".9"/><rect x="878.2" y="111" width="10.8" height="10.8" rx="1.84" fill="#d6d2c6"/><path d="M883.6 112.08 L883.6 120.72 M879.86 114.24 L887.34 118.56 M879.86 118.56 L887.34 114.24 " stroke="#fff" stroke-width="1.08" stroke-linecap="round"/><polygon points="885.94,117.75 883.6,119.1 881.26,117.75 881.26,115.05 883.6,113.7 885.94,115.05" fill="#fff"/><circle cx="883.6" cy="116.4" r="0.81" fill="#d6d2c6" opacity=".8"/><path d="M893.8 107.8 h9.2 l-4.6 5 z" fill="#cdcac5"/><path d="M919.6 101.6 L929.4 104.6 L928.6 116.4 L917.4 117.4 L912.6 109.6 z" fill="none" stroke="#dcdedb" stroke-width="2"/><rect x="918.2" y="100.2" width="2.8" height="2.8" fill="#f2f1ef" stroke="#d6d3cf" stroke-width=".9"/><rect x="911.4" y="108.2" width="2.8" height="2.8" fill="#f2f1ef" stroke="#d6d3cf" stroke-width=".9"/><rect x="923.2" y="111" width="10.8" height="10.8" rx="1.84" fill="#d6d2c6"/><path d="M928.6 112.08 L928.6 120.72 M924.86 114.24 L932.34 118.56 M924.86 118.56 L932.34 114.24 " stroke="#fff" stroke-width="1.08" stroke-linecap="round"/><polygon points="930.94,117.75 928.6,119.1 926.26,117.75 926.26,115.05 928.6,113.7 930.94,115.05" fill="#fff"/><circle cx="928.6" cy="116.4" r="0.81" fill="#d6d2c6" opacity=".8"/><path d="M938.8 107.8 h9.2 l-4.6 5 z" fill="#cdcac5"/><rect x="5" y="141" width="1" height="1" fill="#bdb9b3"/><rect x="8" y="141" width="1" height="1" fill="#bdb9b3"/><rect x="5" y="144" width="1" height="1" fill="#bdb9b3"/><rect x="8" y="144" width="1" height="1" fill="#bdb9b3"/><rect x="5" y="147" width="1" height="1" fill="#bdb9b3"/><rect x="8" y="147" width="1" height="1" fill="#bdb9b3"/><rect x="5" y="150" width="1" height="1" fill="#bdb9b3"/><rect x="8" y="150" width="1" height="1" fill="#bdb9b3"/><rect x="5" y="153" width="1" height="1" fill="#bdb9b3"/><rect x="8" y="153" width="1" height="1" fill="#bdb9b3"/><rect x="5" y="156" width="1" height="1" fill="#bdb9b3"/><rect x="8" y="156" width="1" height="1" fill="#bdb9b3"/><rect x="477" y="141" width="1" height="1" fill="#bdb9b3"/><rect x="480" y="141" width="1" height="1" fill="#bdb9b3"/><rect x="477" y="144" width="1" height="1" fill="#bdb9b3"/><rect x="480" y="144" width="1" height="1" fill="#bdb9b3"/><rect x="477" y="147" width="1" height="1" fill="#bdb9b3"/><rect x="480" y="147" width="1" height="1" fill="#bdb9b3"/><rect x="477" y="150" width="1" height="1" fill="#bdb9b3"/><rect x="480" y="150" width="1" height="1" fill="#bdb9b3"/><rect x="477" y="153" width="1" height="1" fill="#bdb9b3"/><rect x="480" y="153" width="1" height="1" fill="#bdb9b3"/><rect x="477" y="156" width="1" height="1" fill="#bdb9b3"/><rect x="480" y="156" width="1" height="1" fill="#bdb9b3"/><rect x="1095.1" y="141" width="1" height="1" fill="#bdb9b3"/><rect x="1098.1" y="141" width="1" height="1" fill="#bdb9b3"/><rect x="1095.1" y="144" width="1" height="1" fill="#bdb9b3"/><rect x="1098.1" y="144" width="1" height="1" fill="#bdb9b3"/><rect x="1095.1" y="147" width="1" height="1" fill="#bdb9b3"/><rect x="1098.1" y="147" width="1" height="1" fill="#bdb9b3"/><rect x="1095.1" y="150" width="1" height="1" fill="#bdb9b3"/><rect x="1098.1" y="150" width="1" height="1" fill="#bdb9b3"/><rect x="1095.1" y="153" width="1" height="1" fill="#bdb9b3"/><rect x="1098.1" y="153" width="1" height="1" fill="#bdb9b3"/><rect x="1095.1" y="156" width="1" height="1" fill="#bdb9b3"/><rect x="1098.1" y="156" width="1" height="1" fill="#bdb9b3"/><circle cx="25.6" cy="145.5" r="8.3" fill="#5d8ec9" stroke="#4a7ab5" stroke-width=".6"/><path d="M18.8 142.6 a7.2 7.2 0 0 1 11.6-3.4" fill="none" stroke="#8fb3de" stroke-width="1.4" opacity=".8"/><text x="22.2" y="150.6" font-family="Liberation Serif, serif" font-style="italic" font-weight="bold" font-size="14.5" fill="#fff">i</text><g transform="translate(27.6 147.4) rotate(-18)"><path d="M0 0 L0.4 12.4 L3.6 9.4 L6.6 15 L9.2 13.6 L6.2 8.2 L10.6 7.6 z" fill="#fff" stroke="#3a3a3a" stroke-width="1" stroke-linejoin="round"/></g><g opacity=".95"><path d="M59.04 139.79 L59.03 137.57 L61.37 137.57 L61.36 139.79 L64.01 140.76 L65.43 139.05 L67.22 140.55 L65.78 142.25 L67.2 144.69 L69.38 144.29 L69.79 146.6 L67.6 146.97 L67.11 149.75 L69.04 150.85 L67.87 152.88 L65.95 151.76 L63.79 153.57 L64.56 155.65 L62.36 156.45 L61.61 154.36 L58.79 154.36 L58.04 156.45 L55.84 155.65 L56.61 153.57 L54.45 151.76 L52.53 152.88 L51.36 150.85 L53.29 149.75 L52.8 146.97 L50.61 146.6 L51.02 144.29 L53.2 144.69 L54.62 142.25 L53.18 140.55 L54.97 139.05 L56.39 140.76 z" fill="#efeeed" stroke="#d6d4d1" stroke-width="1" stroke-linejoin="round"/><circle cx="60.2" cy="147.1" r="5.2" fill="#dcdcdc" stroke="#cfcfcf"/><path d="M58.6 144.4 l4.4 2.7 l-4.4 2.7 z" fill="#f6f6f6"/><g transform="translate(64.4 150.2) rotate(-18)"><path d="M0 0 L0.4 11 L3.2 8.4 L6 13.6 L8.2 12.4 L5.6 7.4 L9.4 6.8 z" fill="#f6f5f4" stroke="#d0cecb" stroke-width=".9" stroke-linejoin="round"/></g></g><path d="M79 146.9 h9.2 l-4.6 5 z" fill="#cdcac5"/><rect x="96.6" y="138.8" width="21" height="18.6" fill="#e2e2e2" stroke="#1c1c1c" stroke-width="1" stroke-dasharray="2 1.4"/><rect x="97.8" y="139.8" width="12.8" height="12.8" fill="#fbe64a" stroke="#c9a81c" stroke-width="1"/><g transform="translate(104 145.2) rotate(-22)"><path d="M0 0 L0.4 13.4 L3.8 10.2 L7 16.2 L9.8 14.8 L6.6 8.8 L11.4 8.2 z" fill="#fff" stroke="#3a3a3a" stroke-width="1" stroke-linejoin="round"/></g><path d="M123.65 146.9 h9.5 l-4.75 5 z" fill="#2e2e2e"/><rect x="146.4" y="145.5" width="15.2" height="13" fill="#fbe64a" stroke="#c9a81c" stroke-width="1"/><rect x="143.4" y="140.5" width="14.4" height="12.8" rx=".8" fill="#c8d2df" stroke="#8c8c8c" stroke-width="1"/><rect x="145.4" y="142.6" width="10.4" height="3" fill="#fff" stroke="#8c8c8c" stroke-width=".7"/><rect x="145.4" y="147.8" width="10.4" height="3" fill="#fff" stroke="#8c8c8c" stroke-width=".7"/><path d="M168.65 146.9 h9.5 l-4.75 5 z" fill="#2e2e2e"/><rect x="187.6" y="139.8" width="13.2" height="12.8" fill="#fbe64a" stroke="#c9a81c" stroke-width="1"/><rect x="198.2" y="150.1" width="10.8" height="10.6" rx="1.8" fill="#d91212" stroke="#c00000" stroke-width=".6"/><circle cx="203.6" cy="155.4" r="3.4" fill="#f7d0d0" stroke="#fff" stroke-width="1"/><path d="M201.4 157.6 L205.8 153.2" stroke="#d91212" stroke-width="1.6"/><rect x="220.5" y="139.8" width="19" height="18.8" fill="#eef0f3" stroke="#5e8cc6" stroke-width="1.1"/><rect x="221" y="140.3" width="18" height="4.2" fill="#c3d6ee"/><path d="M220.5 144.6 h19" stroke="#5e8cc6" stroke-width=".9"/><path d="M223 142.4 h3.6 M229 142.4 h8" stroke="#5e8cc6" stroke-width="1.3"/><path d="M223 147.2 h3.6 M229 147.2 h8 M223 150.2 h3.6 M229 150.2 h8 M223 153.2 h3.6 M229 153.2 h8 M223 156.2 h3.6 M229 156.2 h8" stroke="#5e8cc6" stroke-width=".9"/><path d="M253.8 139.4 V158 M272.4 139.4 V158 M253.8 141.3 H272.4 M253.8 147.3 H272.4 M253.8 153.3 H272.4" stroke="#555" stroke-width="1"/><rect x="252.4" y="157.6" width="21.4" height="2" rx=".6" fill="#e0e0e0" stroke="#555" stroke-width=".8"/><circle cx="260.6" cy="141.3" r="2.2" fill="#fbd0d0" stroke="#d63030" stroke-width=".9"/><circle cx="268.5" cy="141.3" r="2.2" fill="#fbd0d0" stroke="#d63030" stroke-width=".9"/><circle cx="258.3" cy="147.3" r="2.2" fill="#c2ecc2" stroke="#4aa84a" stroke-width=".9"/><circle cx="263.6" cy="147.3" r="2.2" fill="#c2ecc2" stroke="#4aa84a" stroke-width=".9"/><circle cx="258.3" cy="153.3" r="2.2" fill="#b9d8f5" stroke="#3f7cc0" stroke-width=".9"/><circle cx="263.6" cy="153.3" r="2.2" fill="#b9d8f5" stroke="#3f7cc0" stroke-width=".9"/><circle cx="268.5" cy="153.3" r="2.2" fill="#b9d8f5" stroke="#3f7cc0" stroke-width=".9"/><path d="M294.47 142.35 L294.13 138.35 L297.67 138.35 L297.33 142.35 L299.59 143.29 L302.18 140.21 L304.69 142.72 L301.61 145.31 L302.55 147.57 L306.55 147.23 L306.55 150.77 L302.55 150.43 L301.61 152.69 L304.69 155.28 L302.18 157.79 L299.59 154.71 L297.33 155.65 L297.67 159.65 L294.13 159.65 L294.47 155.65 L292.21 154.71 L289.62 157.79 L287.11 155.28 L290.19 152.69 L289.25 150.43 L285.25 150.77 L285.25 147.23 L289.25 147.57 L290.19 145.31 L287.11 142.72 L289.62 140.21 L292.21 143.29 z" fill="#8bb1e4" stroke="#5587cc" stroke-width="0.9" stroke-linejoin="round" stroke-dasharray="2.2 .8"/><circle cx="295.9" cy="149" r="2.2" fill="#fff" stroke="#5587cc" stroke-width="0.7200000000000001"/><text x="320.8" y="158.3" font-family="Liberation Serif, DejaVu Serif, serif" font-size="28.5" fill="#a0059c" stroke="#a0059c" stroke-width=".5" textLength="16.4" lengthAdjust="spacingAndGlyphs">Σ</text><path d="M352.4 144 H371.8 M352.4 141.6 V146.4 M371.8 141.6 V146.4" stroke="#2d4f78" stroke-width="1.4"/><rect x="351.4" y="149.5" width="21.4" height="7.2" rx=".8" fill="#c4c4c4" stroke="#7c7c7c" stroke-width="1"/><path d="M354.6 150 v2.6 M357.8 150 v2.6 M361 150 v4 M364.2 150 v2.6 M367.4 150 v2.6 M370.4 150 v2.6" stroke="#6a6a6a" stroke-width=".9"/><path d="M378.75 146.9 h9.5 l-4.75 5 z" fill="#2e2e2e"/><rect x="391.5" y="134.5" width="31" height="30" rx="3" fill="#dbd8d4" stroke="#b5b1ab"/><path d="M399.4 138.6 h15.4 q3.2 0 3.2 3.2 v5.6 q0 3.2-3.2 3.2 h-7.2 l-5 5.6 l.8-5.6 h-4 q-3.2 0-3.2-3.2 v-5.6 q0-3.2 3.2-3.2 z" fill="#fcee94" stroke="#d7b31f" stroke-width="1"/><circle cx="401.2" cy="156.2" r="3.7" fill="#7bb57b" stroke="#4f8d4f" stroke-width=".9"/><path d="M402 155.4 l2.4-2.6 l.2 1.6 z" fill="#fcee94"/><path d="M429.4 138.8 h21.2 v14.6 h-12.6 l-8.6 6 l4.4-6 h-4.4 z" fill="#e4edf4" stroke="#9c9c9c" stroke-width="1" stroke-linejoin="round"/><text x="434.8" y="150.6" font-family="Liberation Serif, serif" font-size="15" fill="#333">T</text><path d="M456.75 146.9 h9.5 l-4.75 5 z" fill="#2e2e2e"/><path d="M506 138 h5.6 v20 h-5.6 z" fill="#ebe8dc" stroke="#dcd8cc" stroke-width=".8"/><path d="M509.4 140.6 h2 M509.4 143 h2 M509.4 145.4 h2 M509.4 147.8 h2 M509.4 150.2 h2 M509.4 152.6 h2 M509.4 155 h2" stroke="#d5d1c4" stroke-width=".6"/><path d="M489.6 138.4 V160 H511.6 z M493.2 148.6 V156.6 H501.2 z" fill="#e9dfdc" fill-rule="evenodd" stroke="#d9cfcc" stroke-width=".9" stroke-linejoin="round"/><circle cx="525.7" cy="148.4" r="2.7" fill="#dddedb" stroke="#d2d3cf" stroke-width=".8"/><circle cx="533.1" cy="140.9" r="2.7" fill="#dddedb" stroke="#d2d3cf" stroke-width=".8"/><circle cx="541.9" cy="142.8" r="2.7" fill="#dddedb" stroke="#d2d3cf" stroke-width=".8"/><rect x="535.3" y="150.2" width="10.8" height="10.6" rx="1.6" fill="#d2d2d2"/><path d="M537.1 154.3 h3.6 v-2.2 l3.6 3.4 l-3.6 3.4 v-2.2 h-3.6 z" fill="#fbfbfb"/><path d="M550.9 146.7 h9.2 l-4.6 5 z" fill="#cdcac5"/><path transform="translate(568 138.4) scale(1 1)" d="M5.4 0 C9 -.4 11 1.6 14 1.4 C18 .8 22 2.400000000000001 22 6.2 C22 10 18.6 11.6 15 11 C12 10.4 11 9 8 9.4 C4 10 0 8.6 0 4.8 C0 1.8 2.6 .2 5.4 0 z" fill="#dcdedb" stroke="#d0d2ce" stroke-width=".9"/><rect x="580" y="150.2" width="10.8" height="10.6" rx="1.6" fill="#d2d2d2"/><path d="M583.4 157.8 a2.8 2.8 0 1 0 -.6-3.600000000000001" fill="none" stroke="#fbfbfb" stroke-width="1.4"/><path d="M581.4 153.2 l3.2 .2 l-1.600000000000001 2.6 z" fill="#fbfbfb"/><circle cx="608.5" cy="145" r="7" fill="#dcdedb" stroke="#d0d2ce" stroke-width=".9"/><path d="M615.8 144.8 L622.6 148.8 V156.8 L615.8 160.8 L609 156.8 V148.8 z" fill="#e3e3e3" stroke="#d4d4d4" stroke-width=".9"/><path d="M609.6 146 L616 153.4 M616.4 150.4 V153.8 H613" fill="none" stroke="#cfcfcf" stroke-width="1"/><path transform="translate(634 138.4) scale(1 1)" d="M5.4 0 C9 -.4 11 1.6 14 1.4 C18 .8 22 2.400000000000001 22 6.2 C22 10 18.6 11.6 15 11 C12 10.4 11 9 8 9.4 C4 10 0 8.6 0 4.8 C0 1.8 2.6 .2 5.4 0 z" fill="#dcdedb" stroke="#d0d2ce" stroke-width=".9"/><ellipse cx="642.6" cy="142.6" rx="3.8" ry="2.4" transform="rotate(-12 642.6 142.6)" fill="#f3f2f0" stroke="#d0d2ce" stroke-width=".8"/><rect x="646.3" y="150.1" width="10.8" height="10.8" rx="1.84" fill="#d6d2c6"/><path d="M651.7 151.18 L651.7 159.82 M647.96 153.34 L655.44 157.66 M647.96 157.66 L655.44 153.34 " stroke="#fff" stroke-width="1.08" stroke-linecap="round"/><polygon points="654.04,156.85 651.7,158.2 649.36,156.85 649.36,154.15 651.7,152.8 654.04,154.15" fill="#fff"/><circle cx="651.7" cy="155.5" r="0.81" fill="#d6d2c6" opacity=".8"/><path transform="translate(667.2 138.4) scale(1 1)" d="M5.4 0 C9 -.4 11 1.6 14 1.4 C18 .8 22 2.400000000000001 22 6.2 C22 10 18.6 11.6 15 11 C12 10.4 11 9 8 9.4 C4 10 0 8.6 0 4.8 C0 1.8 2.6 .2 5.4 0 z" fill="#dcdedb" stroke="#d0d2ce" stroke-width=".9"/><path d="M671 150.6 c2.6-1.8 6-1.4 6.4 .6 c.4 2.6-2.6 7-6 7.4 c-3.600000000000001 .4-3.800000000000001-5-.4-8 z" fill="#dcdedb" stroke="#d0d2ce" stroke-width=".9"/><rect x="679.2" y="150.1" width="10.8" height="10.8" rx="1.84" fill="#d6d2c6"/><path d="M684.6 151.18 L684.6 159.82 M680.86 153.34 L688.34 157.66 M680.86 157.66 L688.34 153.34 " stroke="#fff" stroke-width="1.08" stroke-linecap="round"/><polygon points="686.94,156.85 684.6,158.2 682.26,156.85 682.26,154.15 684.6,152.8 686.94,154.15" fill="#fff"/><circle cx="684.6" cy="155.5" r="0.81" fill="#d6d2c6" opacity=".8"/><path transform="translate(700 138) scale(1 1)" d="M5.4 0 C9 -.4 11 1.6 14 1.4 C18 .8 22 2.400000000000001 22 6.2 C22 10 18.6 11.6 15 11 C12 10.4 11 9 8 9.4 C4 10 0 8.6 0 4.8 C0 1.8 2.6 .2 5.4 0 z" fill="#dcdedb" stroke="#d0d2ce" stroke-width=".9"/><ellipse cx="707.6" cy="142.6" rx="4" ry="2.6" transform="rotate(-12 707.6 142.6)" fill="#d3d5d1" stroke="#c9cbc7" stroke-width=".8"/><rect x="712.2" y="150.1" width="10.8" height="10.8" rx="1.84" fill="#d6d2c6"/><path d="M717.6 151.18 L717.6 159.82 M713.86 153.34 L721.34 157.66 M713.86 157.66 L721.34 153.34 " stroke="#fff" stroke-width="1.08" stroke-linecap="round"/><polygon points="719.94,156.85 717.6,158.2 715.26,156.85 715.26,154.15 717.6,152.8 719.94,154.15" fill="#fff"/><circle cx="717.6" cy="155.5" r="0.81" fill="#d6d2c6" opacity=".8"/><path transform="translate(733.2 138) scale(1 1)" d="M5.4 0 C9 -.4 11 1.6 14 1.4 C18 .8 22 2.400000000000001 22 6.2 C22 10 18.6 11.6 15 11 C12 10.4 11 9 8 9.4 C4 10 0 8.6 0 4.8 C0 1.8 2.6 .2 5.4 0 z" fill="#dcdedb" stroke="#d0d2ce" stroke-width=".9"/><ellipse cx="741.8" cy="142.6" rx="4" ry="2.6" transform="rotate(-12 741.8 142.6)" fill="#f6f5f3" stroke="#d0d2ce" stroke-width=".8"/><rect x="746" y="150.8" width="10.8" height="10.6" rx="1.6" fill="#ead9db"/><path d="M748.6 153.4 l5.6 5.4 M754.2 153.4 l-5.6 5.4" stroke="#fbfbfb" stroke-width="2"/><path transform="translate(766.3 138) scale(1 1)" d="M5.4 0 C9 -.4 11 1.6 14 1.4 C18 .8 22 2.400000000000001 22 6.2 C22 10 18.6 11.6 15 11 C12 10.4 11 9 8 9.4 C4 10 0 8.6 0 4.8 C0 1.8 2.6 .2 5.4 0 z" fill="#dcdedb" stroke="#d0d2ce" stroke-width=".9"/><path d="M770.2 150.4 c2.6-1.8 6-1.4 6.4 .6 c.4 2.6-2.6 7-6 7.4 c-3.600000000000001 .4-3.800000000000001-5-.4-8 z" fill="#dcdedb" stroke="#d0d2ce" stroke-width=".9"/><rect x="779" y="150.8" width="10.8" height="10.6" rx="1.6" fill="#ead9db"/><path d="M781.6 153.4 l5.6 5.4 M787.2 153.4 l-5.6 5.4" stroke="#fbfbfb" stroke-width="2"/><path d="M803.4 138.6 c4-1.600000000000001 8 .6 11.6 .2 c3.400000000000001-.4 5.800000000000001 1.600000000000001 5.800000000000001 4.800000000000001 c0 3.600000000000001-3.600000000000001 5.600000000000001-7.2 5.2 c-3-.2-5.2 1-5.6 4 c-.4 3.400000000000001-1.2 5.800000000000001-3.400000000000001 5.800000000000001 c-2.600000000000001 0-3.400000000000001-3.600000000000001-3.400000000000001-7 c-.2-3.800000000000001-2.600000000000001-5.600000000000001-2.200000000000001-8.4 c.2-2.400000000000001 2-3.800000000000001 4.4-4.600000000000001 z" fill="#dcdedb" stroke="#d0d2ce" stroke-width=".9"/><path d="M846.4 138.6 c4.2-1.2 7.800000000000001 2 7.2 6 c-.6 4-4.2 5-6.2 8.4 c-2.200000000000001 3.800000000000001-5.2 7-9.6 6.400000000000001 c-4.4-.6-6.6-4.800000000000001-5.4-9 c1-3.800000000000001 4.4-5.2 7.2-7.6 c2.200000000000001-1.8 4-3.400000000000001 6.800000000000001-4.2 z" fill="#e6e2d8" stroke="#d9d3c6" stroke-width=".9"/><path d="M846.2 141 c2.800000000000001-.8 5.2 1.2 4.800000000000001 3.800000000000001 c-.4 2.800000000000001-3.400000000000001 4-5.2 6.800000000000001 c-1.8 3-4 5.400000000000001-7 5 c-3-.4-4.400000000000001-3.200000000000001-3.600000000000001-6 c.8-2.800000000000001 3.400000000000001-3.800000000000001 5.600000000000001-5.800000000000001 c1.8-1.600000000000001 3.200000000000001-3 5.400000000000001-3.800000000000001 z" fill="#dcdedb" stroke="#d3d5d1" stroke-width=".6"/><path d="M866.7 139.2 L872.5 152.4 L878.8 141.9 H885.1" fill="none" stroke="#dcdedb" stroke-width="1.2"/><rect x="865.3" y="137.8" width="2.8" height="2.8" fill="#f2f1ef" stroke="#d6d3cf" stroke-width=".9"/><rect x="871.1" y="151" width="2.8" height="2.8" fill="#f2f1ef" stroke="#d6d3cf" stroke-width=".9"/><rect x="877.4" y="140.5" width="2.8" height="2.8" fill="#f2f1ef" stroke="#d6d3cf" stroke-width=".9"/><rect x="883.7" y="140.5" width="2.8" height="2.8" fill="#f2f1ef" stroke="#d6d3cf" stroke-width=".9"/><rect x="877.2" y="150" width="10.8" height="10.6" rx="1.6" fill="#cfcfcf"/><circle cx="882.6" cy="155.3" r="3.2" fill="none" stroke="#fbfbfb" stroke-width="1.3" stroke-dasharray="7 3"/><path d="M898 147.8 H920 M907.5 137 V157 M912.7 148 V160" stroke="#dadbd8" stroke-width="1.1"/><path d="M907.5 150 V157" stroke="#ecd3d5" stroke-width="1.1"/><path d="M912.7 154 V160" stroke="#c9c9c9" stroke-width="1.6"/><rect x="906.2" y="146.5" width="2.6" height="2.6" fill="#f2f1ef" stroke="#d6d3cf" stroke-width=".9"/><rect x="911.4" y="146.5" width="2.6" height="2.6" fill="#f2f1ef" stroke="#d6d3cf" stroke-width=".9"/><rect x="913.4" y="138" width="6.8" height="6.8" rx="1.16" fill="#d6d2c6"/><path d="M916.8 138.68 L916.8 144.12 M914.44 140.04 L919.16 142.76 M914.44 142.76 L919.16 140.04 " stroke="#fff" stroke-width="0.68" stroke-linecap="round"/><polygon points="918.27,142.25 916.8,143.1 915.33,142.25 915.33,140.55 916.8,139.7 918.27,140.55" fill="#fff"/><circle cx="916.8" cy="141.4" r="0.51" fill="#d6d2c6" opacity=".8"/><rect x="898" y="153.4" width="6.6" height="6.6" rx="1" fill="#ead9db"/><path d="M899.6 155 l3.4 3.4 M903 155 l-3.4 3.4" stroke="#fbfbfb" stroke-width="1.3"/><path transform="translate(931.3 138) scale(0.97 1.03)" d="M5.4 0 C9 -.4 11 1.6 14 1.4 C18 .8 22 2.400000000000001 22 6.2 C22 10 18.6 11.6 15 11 C12 10.4 11 9 8 9.4 C4 10 0 8.6 0 4.8 C0 1.8 2.6 .2 5.4 0 z" fill="#dcdedb" stroke="#d0d2ce" stroke-width=".9"/><path d="M941.5 138 C943.3 142 940.7 146 942.1 150" stroke="#f3f2f0" stroke-width="1.2" fill="none"/><path d="M944.7 140 L939.7 154.6 M939.9 140 L944.9 154.6" stroke="#e1d3d3" stroke-width="1.3"/><ellipse cx="938.7" cy="156.8" rx="1.8" ry="2.6" transform="rotate(25 938.7 156.8)" fill="none" stroke="#e3d0d2" stroke-width="1.1"/><ellipse cx="945.9" cy="156.8" rx="1.8" ry="2.6" transform="rotate(-25 945.9 156.8)" fill="none" stroke="#e3d0d2" stroke-width="1.1"/><path transform="translate(964.3 138) scale(0.97 1.03)" d="M5.4 0 C9 -.4 11 1.6 14 1.4 C18 .8 22 2.400000000000001 22 6.2 C22 10 18.6 11.6 15 11 C12 10.4 11 9 8 9.4 C4 10 0 8.6 0 4.8 C0 1.8 2.6 .2 5.4 0 z" fill="#dcdedb" stroke="#d0d2ce" stroke-width=".9"/><path d="M974.5 138 C976.3 142 973.7 146 975.1 150" stroke="#f3f2f0" stroke-width="1.2" fill="none"/><path d="M977.7 140 L972.7 154.6 M972.9 140 L977.9 154.6" stroke="#e1d3d3" stroke-width="1.3"/><ellipse cx="971.7" cy="156.8" rx="1.8" ry="2.6" transform="rotate(25 971.7 156.8)" fill="none" stroke="#e3d0d2" stroke-width="1.1"/><ellipse cx="978.9" cy="156.8" rx="1.8" ry="2.6" transform="rotate(-25 978.9 156.8)" fill="none" stroke="#e3d0d2" stroke-width="1.1"/><path transform="translate(997.2 138) scale(0.98 1.03)" d="M5.4 0 C9 -.4 11 1.6 14 1.4 C18 .8 22 2.400000000000001 22 6.2 C22 10 18.6 11.6 15 11 C12 10.4 11 9 8 9.4 C4 10 0 8.6 0 4.8 C0 1.8 2.6 .2 5.4 0 z" fill="#dcdedb" stroke="#d0d2ce" stroke-width=".9"/><path d="M1007.8 138 C1009.6 142 1007 146 1008.4 150" stroke="#f3f2f0" stroke-width="1.1" fill="none"/><path d="M1004.4 142 h7 M1004.4 144.4 h7 M1004.4 146.8 h7" stroke="#cfd1cd" stroke-width=".9"/><path d="M1002 149.6 C1003 153.6 1006.4 155.2 1009.6 157.6" fill="none" stroke="#d4d6d2" stroke-width="1"/><g fill="none" stroke="#dedfdc" stroke-width=".9"><path d="M1031 139.4 h19.6 M1031 142.8 h19.6 M1031 146.2 h19.6 M1031 149.6 h19.6 M1031 153 h19.6 M1031 158.4 h19.6"/><path d="M1037 141 h4 l2 1.800000000000001 l2-1.800000000000001 h3 M1037 147.8 h4 l2 1.800000000000001 l2-1.800000000000001 h3 M1037 154.8 h4 l2 1.800000000000001 l2-1.800000000000001 h3" stroke="#cfd0cd"/></g><path d="M1077.4 146.8 l2.6 2.6 l-2.6 2.6 M1081.4 146.8 l2.6 2.6 l-2.6 2.6" fill="none" stroke="#111" stroke-width="1.5"/><defs><radialGradient id="glb" cx=".4" cy=".3" r=".8"><stop offset="0" stop-color="#b4cbec"/><stop offset=".6" stop-color="#86a8d8"/><stop offset="1" stop-color="#5f87c2"/></radialGradient></defs><ellipse cx="1119" cy="148" rx="12" ry="10.9" fill="url(#glb)" stroke="#4a72b0" stroke-width=".9"/><path d="M1110.6 143 l2.8-2.6 l2.8 .2 l.6 2.2 l-2.2 1.2 l.2 2.4 l-1.8 1.6 l-2-1.6 z M1117 139.6 l3.2 0 l.6 2.2 l-2.600000000000001 1 z M1121.4 141.6 l4-.8 l2.8 2.4 l.4 3 l-2.2 .6 l-.6 2.400000000000001 l-2-.6 l-.4-2.8 l-2.2-1.400000000000001 z M1114.6 149 l3 .4 l.8 3 l-1.2 3.4 l-1.8-1 z M1121.6 150 l2.4 .4 l-.2 3 l-1.8 .6 z" fill="#213f70" opacity=".9"/><g fill="none" stroke="#e6eef9" stroke-width=".7" opacity=".9"><ellipse cx="1119" cy="147.6" rx="5.4" ry="10.7"/><path d="M1119 136.8 V158.4 M1107.2 147.6 H1130.8 M1108.6 142.2 H1129.4 M1108.6 153 H1129.4"/></g><path d="M1115.2 149.8 h3.6 l.6 2 h.8 l.6-2 h3.6 l7 8 h-8 l-1.6-3.4 h-3.6 l-1.6 3.4 h-8 z" fill="#0c0c0c"/><ellipse cx="1114.3" cy="157.9" rx="4" ry="2.8" fill="#0c0c0c"/><ellipse cx="1127.4" cy="157.9" rx="4" ry="2.8" fill="#0c0c0c"/><ellipse cx="1114.3" cy="158" rx="2.6" ry="1.6" fill="#f4f4f4"/><ellipse cx="1127.4" cy="158" rx="2.6" ry="1.6" fill="#f4f4f4"/></svg>
<div class="t" style="left:810px;top:64px;font-size:15px;color:#1c1c1c;letter-spacing:-0.233px;">1,00000</div>
<div class="t" style="left:951.7px;top:64px;font-size:15px;color:#1c1c1c;letter-spacing:-0.031px;">degrees</div>
<svg class="abs" style="left:0;top:169px" width="53" height="442" viewBox="0 169 53 442"><rect x="19" y="175.5" width="1" height="1" fill="#bdb9b3"/><rect x="19" y="178.5" width="1" height="1" fill="#bdb9b3"/><rect x="22" y="175.5" width="1" height="1" fill="#bdb9b3"/><rect x="22" y="178.5" width="1" height="1" fill="#bdb9b3"/><rect x="25" y="175.5" width="1" height="1" fill="#bdb9b3"/><rect x="25" y="178.5" width="1" height="1" fill="#bdb9b3"/><rect x="28" y="175.5" width="1" height="1" fill="#bdb9b3"/><rect x="28" y="178.5" width="1" height="1" fill="#bdb9b3"/><rect x="31" y="175.5" width="1" height="1" fill="#bdb9b3"/><rect x="31" y="178.5" width="1" height="1" fill="#bdb9b3"/><rect x="34" y="175.5" width="1" height="1" fill="#bdb9b3"/><rect x="34" y="178.5" width="1" height="1" fill="#bdb9b3"/><rect x="19" y="221.5" width="1" height="1" fill="#bdb9b3"/><rect x="19" y="224.5" width="1" height="1" fill="#bdb9b3"/><rect x="22" y="221.5" width="1" height="1" fill="#bdb9b3"/><rect x="22" y="224.5" width="1" height="1" fill="#bdb9b3"/><rect x="25" y="221.5" width="1" height="1" fill="#bdb9b3"/><rect x="25" y="224.5" width="1" height="1" fill="#bdb9b3"/><rect x="28" y="221.5" width="1" height="1" fill="#bdb9b3"/><rect x="28" y="224.5" width="1" height="1" fill="#bdb9b3"/><rect x="31" y="221.5" width="1" height="1" fill="#bdb9b3"/><rect x="31" y="224.5" width="1" height="1" fill="#bdb9b3"/><rect x="34" y="221.5" width="1" height="1" fill="#bdb9b3"/><rect x="34" y="224.5" width="1" height="1" fill="#bdb9b3"/><circle cx="26.2" cy="196.8" r="10.7" fill="#4db151"/><path d="M26.2 186.1 a10.7 10.7 0 0 1 0 21.4 z" fill="#43a047"/><path d="M29.6 192.6 L22.6 196.8 L29.6 201" fill="none" stroke="#fff" stroke-width="1.3"/><circle cx="29.8" cy="192.4" r="2" fill="#fff"/><circle cx="22.4" cy="196.8" r="2" fill="#fff"/><circle cx="29.8" cy="201.2" r="2" fill="#fff"/><path d="M10.5 235.4 L17 249.8 L23.7 235.4 H30" fill="none" stroke="#2b3b4e" stroke-width="1.2"/><circle cx="10.5" cy="235.4" r="1.6" fill="#fff" stroke="#2b3b4e" stroke-width=".9"/><circle cx="17" cy="249.8" r="1.6" fill="#fff" stroke="#2b3b4e" stroke-width=".9"/><circle cx="23.7" cy="235.4" r="1.6" fill="#fff" stroke="#2b3b4e" stroke-width=".9"/><circle cx="30" cy="235.4" r="1.6" fill="#fff" stroke="#2b3b4e" stroke-width=".9"/><rect x="23.3" y="248.3" width="9" height="8.8" rx="1.6" fill="#5ba04f" stroke="#3f7f36" stroke-width=".6"/><path d="M27.8 250.1 v5.2 M25.2 252.7 h5.2" stroke="#fff" stroke-width="1.7"/><rect x="8.2" y="265.2" width="6.4" height="6.4" fill="#1f3a60"/><rect x="14.6" y="265.2" width="6.4" height="6.4" fill="#5d88c4"/><rect x="21" y="265.2" width="6.4" height="6.4" fill="#1f3a60"/><rect x="8.2" y="271.6" width="6.4" height="6.4" fill="#6f97cf"/><rect x="14.6" y="271.6" width="6.4" height="6.4" fill="#1f3a60"/><rect x="21" y="271.6" width="6.4" height="6.4" fill="#8fb1df"/><rect x="8.2" y="278" width="6.4" height="6.4" fill="#1f3a60"/><rect x="14.6" y="278" width="6.4" height="6.4" fill="#6f97cf"/><rect x="21" y="278" width="6.4" height="6.4" fill="#9cbbe6"/><rect x="23.3" y="280.3" width="9" height="8.8" rx="1.6" fill="#5ba04f" stroke="#3f7f36" stroke-width=".6"/><path d="M27.8 282.1 v5.2 M25.2 284.7 h5.2" stroke="#fff" stroke-width="1.7"/><rect x="9.8" y="298.6" width="21" height="21" rx="1" fill="#7fa3d3" stroke="#1f3a60" stroke-width="1.1"/><path d="M9.8 311 H30.8 M20.6 298.6 V319.6 M9.8 298.6 L20.6 311 M20.6 298.6 L9.8 311 M30.8 298.6 L20.6 311 M15.2 311 V319.6 M25.6 311 V319.6" stroke="#1f3a60" stroke-width=".9" fill="none"/><rect x="23.3" y="312" width="9" height="8.8" rx="1.6" fill="#5ba04f" stroke="#3f7f36" stroke-width=".6"/><path d="M27.8 313.8 v5.2 M25.2 316.4 h5.2" stroke="#fff" stroke-width="1.7"/><path d="M18 331.6 a4.6 4.6 0 0 1 4.6 4.6 c0 5-4.4 8.6-9.6 10.4 l-.6-1.4 c3-1.4 5-3.2 5.4-5.2 a4.4 4.4 0 0 1 .2-8.4 z" fill="#3c6cad"/><rect x="23.3" y="344.4" width="9" height="8.8" rx="1.6" fill="#5ba04f" stroke="#3f7f36" stroke-width=".6"/><path d="M27.8 346.2 v5.2 M25.2 348.8 h5.2" stroke="#fff" stroke-width="1.7"/><path d="M30 361 C23.6 362 16.4 367.4 13.2 374.6 L9 385 L10.2 385.4 L13 380.2 C17 380.4 21 378 23.400000000000002 374.8 C21.8 375.2 20.6 375 20.6 375 C23.6 373.4 25.8 371 26.8 368.6 C25.4 369.2 24.2 369 24.2 369 C27.400000000000002 366.8 29.400000000000002 364.4 30 361 z" fill="#4b7fc0" stroke="#244e86" stroke-width=".8" stroke-linejoin="round"/><path d="M12.8 380 C16 373 21.6 366.6 28.400000000000002 362.6" fill="none" stroke="#c6d8f0" stroke-width=".7"/><rect x="23.3" y="376" width="9" height="8.8" rx="1.6" fill="#5ba04f" stroke="#3f7f36" stroke-width=".6"/><path d="M27.8 377.8 v5.2 M25.2 380.4 h5.2" stroke="#fff" stroke-width="1.7"/><rect x="9.8" y="394.6" width="21.2" height="21.2" rx="2.4" fill="#aac4e7" stroke="#6a92c8" stroke-width="1"/><path d="M14 399 L17.4 411.4 L24.2 399 H28" fill="none" stroke="#2b3b4e" stroke-width="1.1"/><circle cx="14" cy="399" r="1.4" fill="#fff" stroke="#2b3b4e" stroke-width=".9"/><circle cx="17.4" cy="411.4" r="1.4" fill="#fff" stroke="#2b3b4e" stroke-width=".9"/><circle cx="24.2" cy="399" r="1.4" fill="#fff" stroke="#2b3b4e" stroke-width=".9"/><rect x="23.3" y="407.9" width="9" height="8.8" rx="1.6" fill="#5ba04f" stroke="#3f7f36" stroke-width=".6"/><path d="M27.8 409.7 v5.2 M25.2 412.3 h5.2" stroke="#fff" stroke-width="1.7"/><path d="M12.6 425 c-3.800000000000001 .6-4.800000000000001 5.2-3.800000000000001 9.4 c.6 2.4 2 4.2 3.400000000000001 3.800000000000001 c1-.2 1.2-1.4 1-3 c.8 1 2 1.4 3 1.200000000000001 l.2 4 c0 1.600000000000001 1.600000000000001 2.4 3.200000000000001 2.2 c1.8-.2 2.400000000000001-1.200000000000001 2.400000000000001-3 v-3.600000000000001 c2.400000000000001-.4 4.4-3.400000000000001 4.2-6.800000000000001 c-.2-3.200000000000001-2.200000000000001-5-5-5 c-1.400000000000001 0-2.400000000000001 .4-3.200000000000001 1 c-1.400000000000001-1-3.600000000000001-1.200000000000001-5.400000000000001-.2 z" fill="#2f62a2" stroke="#1d4276" stroke-width=".6"/><path d="M16.6 427 c-.6 3-.4 6 .2 9 M20.6 436.6 c-1 .6-2 .2-2.400000000000001-.6" fill="none" stroke="#a9c3e6" stroke-width=".8"/><rect x="23.3" y="440.2" width="9" height="8.8" rx="1.6" fill="#5ba04f" stroke="#3f7f36" stroke-width=".6"/><path d="M27.8 442 v5.2 M25.2 444.6 h5.2" stroke="#fff" stroke-width="1.7"/><path d="M36.7 434.3 h9 l-4.5 5 z" fill="#2e2e2e"/><circle cx="20" cy="467" r="11.6" fill="#a9c5ec" stroke="#4a76b8" stroke-width=".9"/><g fill="none" stroke="#e1ebf8" stroke-width=".7"><ellipse cx="20" cy="467" rx="5.22" ry="11.6"/><path d="M8.4 467 H31.6 M20 455.4 V478.6 M10.14 461.2 H29.86 M10.14 472.8 H29.86"/></g><path d="M12.4 462.6 l2.6-2.4 l2.6 .4 l.4 2 l-2 1 l.2 2.2 l-1.6 1.4 l-1.8-1.4 z M19 458.4 l3 .2 l.4 2 l-2.2 .8 z M22.4 461.6 l3.8-.6 l2.6 2.2 l.2 2.6 l-2 .4 l-.6 2.4 l-1.8-.6 l-.4-2.6 l-2-1.2 z M16.4 468 l2.6 .4 l1 2.8 l-1.2 3.2 l-1.6-.8 z M22.6 470.4 l2.2 .4 l-.2 2.8 l-1.6 .6 z" fill="#27497c" opacity=".92"/><rect x="23.3" y="472" width="9" height="8.8" rx="1.6" fill="#5ba04f" stroke="#3f7f36" stroke-width=".6"/><path d="M27.8 473.8 v5.2 M25.2 476.4 h5.2" stroke="#fff" stroke-width="1.7"/><path d="M36.7 466.3 h9 l-4.5 5 z" fill="#2e2e2e"/><ellipse cx="20" cy="499" rx="11.6" ry="10.44" fill="#1f3f6e" stroke="#14294a" stroke-width=".9"/><clipPath id="wcsc"><ellipse cx="20" cy="499" rx="10.799999999999999" ry="9.639999999999999"/></clipPath><g clip-path="url(#wcsc)" fill="none" stroke="#e4ecf7" stroke-width="1.5"><path d="M8.4 493.8 Q20 495.4 31.6 493.8 M8.4 499 H31.6 M8.4 504.2 Q20 502.6 31.6 504.2"/><ellipse cx="20" cy="499" rx="5.568" ry="11.6" stroke-width="1.3"/></g><rect x="23.3" y="504.2" width="9" height="8.8" rx="1.6" fill="#5ba04f" stroke="#3f7f36" stroke-width=".6"/><path d="M27.8 506 v5.2 M25.2 508.6 h5.2" stroke="#fff" stroke-width="1.7"/><circle cx="20" cy="531" r="11.6" fill="#e9f0fa" stroke="#5a86c4" stroke-width=".9"/><g fill="none" stroke="#6b96d2" stroke-width=".8"><ellipse cx="20" cy="531" rx="5.8" ry="11.6"/><path d="M8.4 531 H31.6 M20 519.4 V542.6 M10.14 525.2 H29.86 M10.14 536.8 H29.86"/></g><path d="M14 526 L17.4 537 L23 526 H27" fill="none" stroke="#2b3b4e" stroke-width="1.2"/><circle cx="14" cy="526" r="1.4" fill="#fff" stroke="#2b3b4e" stroke-width=".9"/><circle cx="17.4" cy="537" r="1.4" fill="#fff" stroke="#2b3b4e" stroke-width=".9"/><circle cx="23" cy="526" r="1.4" fill="#fff" stroke="#2b3b4e" stroke-width=".9"/><circle cx="27" cy="526" r="1.4" fill="#fff" stroke="#2b3b4e" stroke-width=".9"/><rect x="23.3" y="536" width="9" height="8.8" rx="1.6" fill="#5ba04f" stroke="#3f7f36" stroke-width=".6"/><path d="M27.8 537.8 v5.2 M25.2 540.4 h5.2" stroke="#fff" stroke-width="1.7"/><path d="M36.7 530.5 h9 l-4.5 5 z" fill="#2e2e2e"/><path d="M10.5 556 L17 570.4 L23.7 556 H30" fill="none" stroke="#2b3b4e" stroke-width="1.2"/><circle cx="10.5" cy="556" r="1.6" fill="#fff" stroke="#2b3b4e" stroke-width=".9"/><circle cx="17" cy="570.4" r="1.6" fill="#fff" stroke="#2b3b4e" stroke-width=".9"/><circle cx="23.7" cy="556" r="1.6" fill="#fff" stroke="#2b3b4e" stroke-width=".9"/><circle cx="30" cy="556" r="1.6" fill="#fff" stroke="#2b3b4e" stroke-width=".9"/><rect x="23.3" y="568.4" width="9" height="8.8" rx="1.6" fill="#d9ad1a" stroke="#b98f0a" stroke-width=".6"/><path d="M27.8 569.8 v6 M24.8 572.8 h6 M25.7 570.7 l4.2 4.2 M29.9 570.7 l-4.2 4.2" stroke="#fff" stroke-width="1"/><path d="M36.7 562.5 h9 l-4.5 5 z" fill="#2e2e2e"/><path d="M23.4 596.6 l2.8 2.6 l2.8-2.6 M23.4 600.8 l2.8 2.6 l2.8-2.6" fill="none" stroke="#111" stroke-width="1.5"/></svg>
<div class="abs" style="left:51px;top:170px;width:1px;height:440px;background:#bdb9b4"></div><div class="abs" style="left:52px;top:170px;width:1px;height:412px;background:#f8f7f5"></div><div class="t" style="left:56.6px;top:171px;font-size:15.2px;color:#1a1a1a;letter-spacing:-0.466px;">Layers</div>
<div id="ltree" class="abs"></div><div id="lsel" class="abs"></div><div class="ind" style="left:293px;top:221px;width:22px;height:18px"></div><div class="ind" style="left:293px;top:240px;width:22px;height:18px"></div><div class="ind" style="left:293px;top:259px;width:22px;height:18px"></div><div class="ind" style="left:293px;top:278px;width:22px;height:18px"></div><div class="ind" style="left:293px;top:297px;width:22px;height:18px"></div><div class="ind" style="left:311px;top:316px;width:4px;height:18px"></div><div class="ind" style="left:311px;top:335px;width:4px;height:18px"></div><div class="ind" style="left:311px;top:392px;width:4px;height:18px"></div><div class="abs" style="left:312.5px;top:278px;width:1.5px;height:17px;background:#e8f0f8"></div><div class="cb" style="left:76px;top:222px"></div><div class="cb" style="left:76px;top:241px"></div><div class="cb" style="left:76px;top:260px"></div><div class="cb" style="left:76px;top:279px"></div><div class="cb" style="left:76px;top:298px"></div><div class="cb" style="left:76px;top:317px"></div><div class="cb" style="left:76px;top:336px"></div><div class="cb" style="left:76px;top:393px"></div><svg class="abs" style="left:50px;top:169px" width="274" height="416" viewBox="50 169 274 416"><path d="M79.2 267 l2.8 3.8 l4.8-7.8" fill="none" stroke="#111" stroke-width="1.7"/><path d="M79.2 286 l2.8 3.8 l4.8-7.8" fill="none" stroke="#111" stroke-width="1.7"/><path d="M79.2 305 l2.8 3.8 l4.8-7.8" fill="none" stroke="#111" stroke-width="1.7"/><path d="M60 225 l5 4.5 l-5 4.5 z" fill="#3a3a3a"/><path d="M58 341 h9.2 l-4.6 5 z" fill="#3a3a3a"/><circle cx="99.5" cy="233.4" r="1.1" fill="#fff" stroke="#5a5a5a" stroke-width=".6"/><circle cx="101.4" cy="226.5" r="1.1" fill="#fff" stroke="#5a5a5a" stroke-width=".6"/><circle cx="108.4" cy="223.4" r="1.1" fill="#fff" stroke="#5a5a5a" stroke-width=".6"/><circle cx="104" cy="248" r="3.1" fill="#a0552d" stroke="#6b3a20" stroke-width=".5"/><circle cx="104" cy="267" r="3.1" fill="#33a02c" stroke="#226a1e" stroke-width=".5"/><circle cx="104" cy="286" r="3.1" fill="#d81ad0" stroke="#7a2aa0" stroke-width=".6"/><rect x="96.5" y="297.5" width="15" height="15" fill="#cbc3ad" stroke="#7a7568" stroke-width="1"/><path d="M96.5 324.5 h15" stroke="#d9534f" stroke-width="1.1"/><path d="M96.5 400.5 h15" stroke="#e0607e" stroke-width="1.1"/><rect x="98.2" y="337.4" width="4" height="4" fill="#6f8fb4"/><rect x="102.2" y="337.4" width="4" height="4" fill="#dfe8f2"/><rect x="106.2" y="337.4" width="4" height="4" fill="#1f3a60"/><rect x="98.2" y="341.4" width="4" height="4" fill="#e8eef6"/><rect x="102.2" y="341.4" width="4" height="4" fill="#1f3a60"/><rect x="106.2" y="341.4" width="4" height="4" fill="#8fb1df"/><rect x="98.2" y="345.4" width="4" height="4" fill="#1f3a60"/><rect x="102.2" y="345.4" width="4" height="4" fill="#a9c3e2"/><rect x="106.2" y="345.4" width="4" height="4" fill="#e8eef6"/><rect x="96" y="354" width="16" height="16" fill="#000"/><rect x="295.6" y="226.4" width="12" height="6.4" rx="1.6" fill="none" stroke="#8d8d8d" stroke-width="1"/><path d="M297.6 224.6 v1.6 M297.6 233 v1.6" stroke="#8d8d8d" stroke-width=".9"/><path d="M300.3 224.6 v1.6 M300.3 233 v1.6" stroke="#8d8d8d" stroke-width=".9"/><path d="M303 224.6 v1.6 M303 233 v1.6" stroke="#8d8d8d" stroke-width=".9"/><path d="M305.7 224.6 v1.6 M305.7 233 v1.6" stroke="#8d8d8d" stroke-width=".9"/><rect x="295.6" y="245.4" width="12" height="6.4" rx="1.6" fill="none" stroke="#8d8d8d" stroke-width="1"/><path d="M297.6 243.6 v1.6 M297.6 252 v1.6" stroke="#8d8d8d" stroke-width=".9"/><path d="M300.3 243.6 v1.6 M300.3 252 v1.6" stroke="#8d8d8d" stroke-width=".9"/><path d="M303 243.6 v1.6 M303 252 v1.6" stroke="#8d8d8d" stroke-width=".9"/><path d="M305.7 243.6 v1.6 M305.7 252 v1.6" stroke="#8d8d8d" stroke-width=".9"/><rect x="295.6" y="264.4" width="12" height="6.4" rx="1.6" fill="none" stroke="#8d8d8d" stroke-width="1"/><path d="M297.6 262.6 v1.6 M297.6 271 v1.6" stroke="#8d8d8d" stroke-width=".9"/><path d="M300.3 262.6 v1.6 M300.3 271 v1.6" stroke="#8d8d8d" stroke-width=".9"/><path d="M303 262.6 v1.6 M303 271 v1.6" stroke="#8d8d8d" stroke-width=".9"/><path d="M305.7 262.6 v1.6 M305.7 271 v1.6" stroke="#8d8d8d" stroke-width=".9"/><rect x="295.6" y="283.4" width="12" height="6.4" rx="1.6" fill="none" stroke="#7d7d7d" stroke-width="1"/><path d="M297.6 281.6 v1.6 M297.6 290 v1.6" stroke="#7d7d7d" stroke-width=".9"/><path d="M300.3 281.6 v1.6 M300.3 290 v1.6" stroke="#7d7d7d" stroke-width=".9"/><path d="M303 281.6 v1.6 M303 290 v1.6" stroke="#7d7d7d" stroke-width=".9"/><path d="M305.7 281.6 v1.6 M305.7 290 v1.6" stroke="#7d7d7d" stroke-width=".9"/><rect x="295.6" y="302.4" width="12" height="6.4" rx="1.6" fill="none" stroke="#8d8d8d" stroke-width="1"/><path d="M297.6 300.6 v1.6 M297.6 309 v1.6" stroke="#8d8d8d" stroke-width=".9"/><path d="M300.3 300.6 v1.6 M300.3 309 v1.6" stroke="#8d8d8d" stroke-width=".9"/><path d="M303 300.6 v1.6 M303 309 v1.6" stroke="#8d8d8d" stroke-width=".9"/><path d="M305.7 300.6 v1.6 M305.7 309 v1.6" stroke="#8d8d8d" stroke-width=".9"/><path d="M61 204.4 l6.2-4.4 l5 2.4 l-5.8 4.6 z" fill="#e33b3b"/><path d="M61.6 202.4 l6-4.2 l4.6 2 l-5.6 4.2 z" fill="#4a7fc6"/><path d="M62.6 200.2 l5.6-3.4 l4 1.4 l-5.4 3.8 z" fill="#f4d51f"/><path d="M75.2 197.4 L70.4 203.4" stroke="#c98a2b" stroke-width="1.8" stroke-linecap="round"/><path d="M66.6 204 l3.2-3 l3.4 2.6 l-2.2 4.2 l-4.2-.4 z" fill="#d7a35a" stroke="#9c6a2a" stroke-width=".6"/><path d="M86.4 203.4 v6.6 h9" fill="none" stroke="#7a7a7a" stroke-width="1"/><path d="M88.4 200.8 v7.2 h8" fill="none" stroke="#7a7a7a" stroke-width="1"/><rect x="90.4" y="197.4" width="8.6" height="9" fill="#f4f4f4" stroke="#7a7a7a" stroke-width="1"/><path d="M92.6 204.4 v-7.4 a1.7 1.7 0 0 1 3.4 0 v6 a.9 .9 0 0 1-1.8 0 v-4.6" fill="none" stroke="#3f6fb0" stroke-width="1"/><rect x="94.2" y="205" width="6.2" height="6" rx="1.2" fill="#5ba04f"/><circle cx="97.3" cy="208" r="1.5" fill="#eaf5e8"/><path d="M110.2 203 q7.400000000000001-7.6 14.8 0 q-7.400000000000001 7.6-14.8 0 z" fill="#f4f4f4" stroke="#8a8a8a" stroke-width=".9"/><path d="M110.4 201.4 q7.200000000000001-6.6 13.4-1.2" fill="none" stroke="#9a9a9a" stroke-width=".8"/><circle cx="117.4" cy="202.8" r="3.2" fill="#5b8cd0" stroke="#3a68a8" stroke-width=".6"/><circle cx="117.6" cy="202.6" r="1.3" fill="#111"/><path d="M122 208.2 h6 l-3 3.2 z" fill="#2e2e2e"/><path d="M136 197 h13.8 l-5.2 6.8 v6.2 l-3.4-1.6 v-4.6 z" fill="#5f8fcc" stroke="#3f6fb0" stroke-width=".9" stroke-linejoin="round"/><path d="M136.6 196.6 h12.6" stroke="#f1d331" stroke-width="1.8"/><text x="161" y="205.9" font-family="Liberation Serif, DejaVu Serif, serif" font-size="19" fill="#6a2a86">ε</text><path d="M169.6 204 h6.4 l-1.6 2.6 v4 h-3.200000000000001 v-4 z" fill="#c9c9c9" stroke="#a9a9a9" stroke-width=".6"/><path d="M180.9 200.9 h9 l-4.5 5 z" fill="#2e2e2e"/><path d="M198.4 197.4 h13.6 M199.8 197.4 v11.4 M199.8 201.6 h2.6 M199.8 207.4 h2.6" fill="none" stroke="#9a9a9a" stroke-width=".9"/><rect x="202" y="200.2" width="2.8" height="2.8" fill="#fcaf3e" stroke="#f57900" stroke-width=".8"/><rect x="202" y="206" width="2.8" height="2.8" fill="#fcaf3e" stroke="#f57900" stroke-width=".8"/><path d="M206 196 h4.4 v7.6 h2.8 l-5 5.8 l-5-5.8 h2.8 z" fill="#5f8fcc" stroke="#2f5c96" stroke-width=".8" stroke-linejoin="round"/><path d="M223.6 197.4 h13.6 M225 197.4 v11.4 M225 201.6 h2.6 M225 207.4 h2.6" fill="none" stroke="#9a9a9a" stroke-width=".9"/><rect x="227.2" y="200.2" width="2.8" height="2.8" fill="#fcaf3e" stroke="#f57900" stroke-width=".8"/><rect x="227.2" y="206" width="2.8" height="2.8" fill="#fcaf3e" stroke="#f57900" stroke-width=".8"/><path d="M231 208.6 h4.4 v-7.6 h2.8 l-5-5.8 l-5 5.8 h2.8 z" fill="#5f8fcc" stroke="#2f5c96" stroke-width=".8" stroke-linejoin="round"/><rect x="248.5" y="196.6" width="10.8" height="10.8" fill="#ececec" stroke="#777" stroke-width="1"/><rect x="256.2" y="205.2" width="6" height="4.8" rx="1.3" fill="#e8334a"/><path d="M257.8 207.6 h2.8" stroke="#fff" stroke-width=".9"/><rect x="290.5" y="173.5" width="10.4" height="10.4" rx="2" fill="none" stroke="#6a6a6a" stroke-width="1"/><rect x="293" y="178.2" width="3.8" height="3.4" rx=".8" fill="none" stroke="#555" stroke-width=".9"/><path d="M294.6 178 v-1.6 q0-.6 .6-.6 h2.6 q.6 0 .6 .6 v2.400000000000001 q0 .6-.6 .6 h-.8" fill="none" stroke="#555" stroke-width=".9"/><rect x="304.5" y="173.5" width="10.4" height="10.4" rx="2" fill="none" stroke="#6a6a6a" stroke-width="1"/><path d="M307 176 l5.400000000000001 5.400000000000001 M312.400000000000001 176 l-5.400000000000001 5.400000000000001" stroke="#2a2a2a" stroke-width="1.8"/><rect x="319.6" y="380" width="1" height="1" fill="#bdb9b3"/><rect x="319.6" y="383" width="1" height="1" fill="#bdb9b3"/><rect x="319.6" y="386" width="1" height="1" fill="#bdb9b3"/><rect x="319.6" y="389" width="1" height="1" fill="#bdb9b3"/><rect x="319.6" y="392" width="1" height="1" fill="#bdb9b3"/><rect x="319.6" y="395" width="1" height="1" fill="#bdb9b3"/></svg>
<div class="t" style="left:118.6px;top:222.5px;font-size:14.8px;color:#7f7f7f;font-weight:bold;font-style:italic;letter-spacing:-0.286px;">Sampled Points</div>
<div class="t" style="left:118.6px;top:241.5px;font-size:14.8px;color:#7f7f7f;font-weight:bold;font-style:italic;letter-spacing:-0.314px;">Random points</div>
<div class="t" style="left:118.6px;top:260.5px;font-size:14.8px;color:#000;font-weight:bold;letter-spacing:-0.007px;">Centroids</div>
<div class="t" style="left:118.6px;top:279.5px;font-size:14.8px;color:#fff;font-weight:bold;letter-spacing:0.012px;text-decoration:underline;text-decoration-thickness:1px;text-underline-offset:2px;">Mean coordinates</div>
<div class="t" style="left:118.6px;top:298.5px;font-size:14.8px;color:#000;font-weight:bold;letter-spacing:0.062px;">Bounding geometry</div>
<div class="t" style="left:118.6px;top:317.5px;font-size:14.8px;color:#7f7f7f;font-weight:bold;font-style:italic;letter-spacing:-0.259px;">roads</div>
<div class="t" style="left:118.6px;top:336.5px;font-size:14.8px;color:#7f7f7f;font-weight:bold;font-style:italic;letter-spacing:0.005px;">srtm_41_19</div>
<div class="t" style="left:118.6px;top:355.5px;font-size:14.8px;color:#111;letter-spacing:-0.634px;">0</div>
<div class="t" style="left:118.6px;top:374.5px;font-size:14.8px;color:#111;letter-spacing:0.020px;">1548</div>
<div class="t" style="left:118.6px;top:393.5px;font-size:14.8px;color:#7f7f7f;font-weight:bold;font-style:italic;letter-spacing:-0.241px;">vector_analysis roads_34S</div>
<div class="abs" style="left:53px;top:583px;width:264px;height:1px;background:#c9c5c0"></div><div class="abs" style="left:52px;top:584px;width:69px;height:26px;background:linear-gradient(#f7f5f3,#f2efec);border:1px solid #b6b2ad;border-top:none;border-radius:0 0 4px 4px"></div><div class="abs" style="left:121px;top:584px;width:80px;height:23.5px;background:#dfdbd6;border:1px solid #c4c0bb;border-left:none;border-top:none;border-radius:0 0 4px 4px"></div><div class="t" style="left:64px;top:588.5px;font-size:15.2px;color:#1a1a1a;letter-spacing:-0.432px;">Layers</div>
<div class="t" style="left:132px;top:587.5px;font-size:15.2px;color:#1a1a1a;letter-spacing:0.114px;">Browser</div>

<div id="canvas" class="abs"></div>
<svg class="abs" style="left:324px;top:170px" width="907" height="440" viewBox="324 170 907 440">
<polygon points="385.6,217.9 570,191.3 793,180.3 1136,230.6 1169.5,238.8 948,541.5 703,599.3" fill="#cbc3ad" stroke="#3a3a3a" stroke-width="0.9" stroke-linejoin="miter"/>
<circle cx="765" cy="360.5" r="3.6" fill="#e31ad6" stroke="#2a2a2a" stroke-width="0.8"/>
<circle cx="784" cy="353.5" r="3.6" fill="#33a02c" stroke="#2a2a2a" stroke-width="0.8"/>
</svg>
<div class="field" style="left:4px;top:615px;width:268px;height:24px;border-radius:3px"></div><div class="t" style="left:34px;top:619px;font-size:15.3px;color:#8d8a86;letter-spacing:-0.070px;">Type to locate (Ctrl+K)</div>
<div class="t" style="left:328.4px;top:620.5px;font-size:12.9px;color:#1a1a1a;letter-spacing:-0.346px;">Coordinate</div>
<div class="field" style="left:391px;top:614.5px;width:112.5px;height:23px"></div><div class="t" style="left:400.6px;top:620.5px;font-size:12.9px;color:#1a1a1a;letter-spacing:-0.480px;">20.1914,-33.9933</div>
<div class="t" style="left:536.4px;top:620.5px;font-size:12.9px;color:#1a1a1a;letter-spacing:-1.050px;">Scale</div>
<div class="field" style="left:566px;top:614.5px;width:96px;height:23px"></div><div class="abs" style="left:642px;top:615.5px;width:19px;height:21px;background:linear-gradient(#f8f7f5,#ebe8e4);border-left:1px solid #c9c5bf;border-radius:0 2px 2px 0"></div><div class="t" style="left:570.6px;top:620.5px;font-size:12.9px;color:#1a1a1a;letter-spacing:0.223px;">1:159115</div>
<div class="t" style="left:695px;top:620.5px;font-size:12.9px;color:#1a1a1a;letter-spacing:0.041px;">Magnifier</div>
<div class="field" style="left:751px;top:614.5px;width:95.5px;height:23px"></div><div class="t" style="left:756.4px;top:620.5px;font-size:12.9px;color:#1a1a1a;letter-spacing:-0.346px;">100%</div>
<div class="t" style="left:857.4px;top:620.5px;font-size:12.9px;color:#1a1a1a;letter-spacing:-0.252px;">Rotation</div>
<div class="field" style="left:912px;top:614.5px;width:92.5px;height:23px"></div><div class="t" style="left:917px;top:620.5px;font-size:12.9px;color:#1a1a1a;letter-spacing:-0.011px;">0,0 °</div>
<div class="cb" style="left:1012px;top:619.5px"></div><div class="t" style="left:1031.4px;top:620.5px;font-size:12.9px;color:#1a1a1a;letter-spacing:-0.547px;">Render</div>
<div class="t" style="left:1107.6px;top:620.5px;font-size:12.9px;color:#1a1a1a;letter-spacing:-1.077px;">EPSG:4326</div>
<svg class="abs" style="left:0;top:610px" width="1232" height="32" viewBox="0 610 1232 32"><circle cx="18.4" cy="625" r="4.2" fill="none" stroke="#8a8a8a" stroke-width="1.3"/><path d="M21.4 628.2 l3.6 3.6" stroke="#8a8a8a" stroke-width="1.5"/><g stroke="#333" fill="none" stroke-width=".9"><ellipse cx="515.4" cy="628.6" rx="4" ry="4.8" transform="rotate(-20 515.4 628.6)" fill="#e6e6e6"/><path d="M511.2 625.6 q3.800000000000001 2.6 7.600000000000001-.6 M514.6 622.6 l.8 4.400000000000001"/><path d="M511 621.4 l3 2.8 M516.4 619.6 l-1.4 3.8 M521.2 621 l-3.6 2.4" stroke-width="1"/></g><path d="M648.2 624.3 h7.6 l-3.8 4.2 z" fill="#3a3a3a"/><path d="M676.8 625.4 v-2.6 a3 3 0 0 1 6 0 v2.6" fill="none" stroke="#6a6a6a" stroke-width="1.5"/><rect x="674.8" y="625" width="10" height="8" rx="1" fill="#6e6e6e"/><path d="M834.5 615.5 h9 q2 0 2 2 v17 q0 2-2 2 h-9 z" fill="#f3f1ee"/><path d="M834.5 615.5 v21" stroke="#d0ccc7" stroke-width="1"/><path d="M836.9 623.6 l3.4-4.2 l3.4 4.2 z M836.9 628.6 l3.4 4.2 l3.4-4.2 z" fill="#3a3a3a"/><path d="M992.5 615.5 h9 q2 0 2 2 v17 q0 2-2 2 h-9 z" fill="#f3f1ee"/><path d="M992.5 615.5 v21" stroke="#d0ccc7" stroke-width="1"/><path d="M994.9 623.6 l3.4-4.2 l3.4 4.2 z M994.9 628.6 l3.4 4.2 l3.4-4.2 z" fill="#3a3a3a"/><path d="M1015.2 626.6 l2.8 3.8 l4.8-7.8" fill="none" stroke="#111" stroke-width="1.7"/><g fill="none" stroke="#5a5a5a" stroke-width=".8"><ellipse cx="1096.6" cy="627" rx="7" ry="6"/><ellipse cx="1096.6" cy="627" rx="3.2" ry="6"/><path d="M1089.6 627 h14 M1096.6 621 v12 M1090.6 624 h12 M1090.6 630 h12"/></g><path d="M1088 623.6 l8.6-4.200000000000001 l8.6 4.200000000000001" fill="none" stroke="#5a5a5a" stroke-width=".8"/><path d="M1193.6 619.8 c4.8 0 8.2 2.6 8.2 6 c0 3.4-3.4 6-8.2 6 c-.8 0-1.600000000000001-.1-2.4-.2 c-1.4 1.4-3 2-4.800000000000001 2 c1-1 1.4-2.2 1.4-3.4 c-1.6-1.100000000000001-2.4-2.6-2.4-4.4 c0-3.4 3.4-6 8.2-6 z" fill="#5e5e5e"/><circle cx="1189.8" cy="625.8" r="1.2" fill="#f3f3f3"/><circle cx="1193.6" cy="625.8" r="1.2" fill="#f3f3f3"/><circle cx="1197.4" cy="625.8" r="1.2" fill="#f3f3f3"/><rect x="1228" y="638" width="1" height="1" fill="#bdb9b3"/><rect x="1225" y="638" width="1" height="1" fill="#bdb9b3"/><rect x="1228" y="635" width="1" height="1" fill="#bdb9b3"/><rect x="1222" y="638" width="1" height="1" fill="#bdb9b3"/><rect x="1225" y="635" width="1" height="1" fill="#bdb9b3"/><rect x="1228" y="632" width="1" height="1" fill="#bdb9b3"/></svg>

</body></html>
